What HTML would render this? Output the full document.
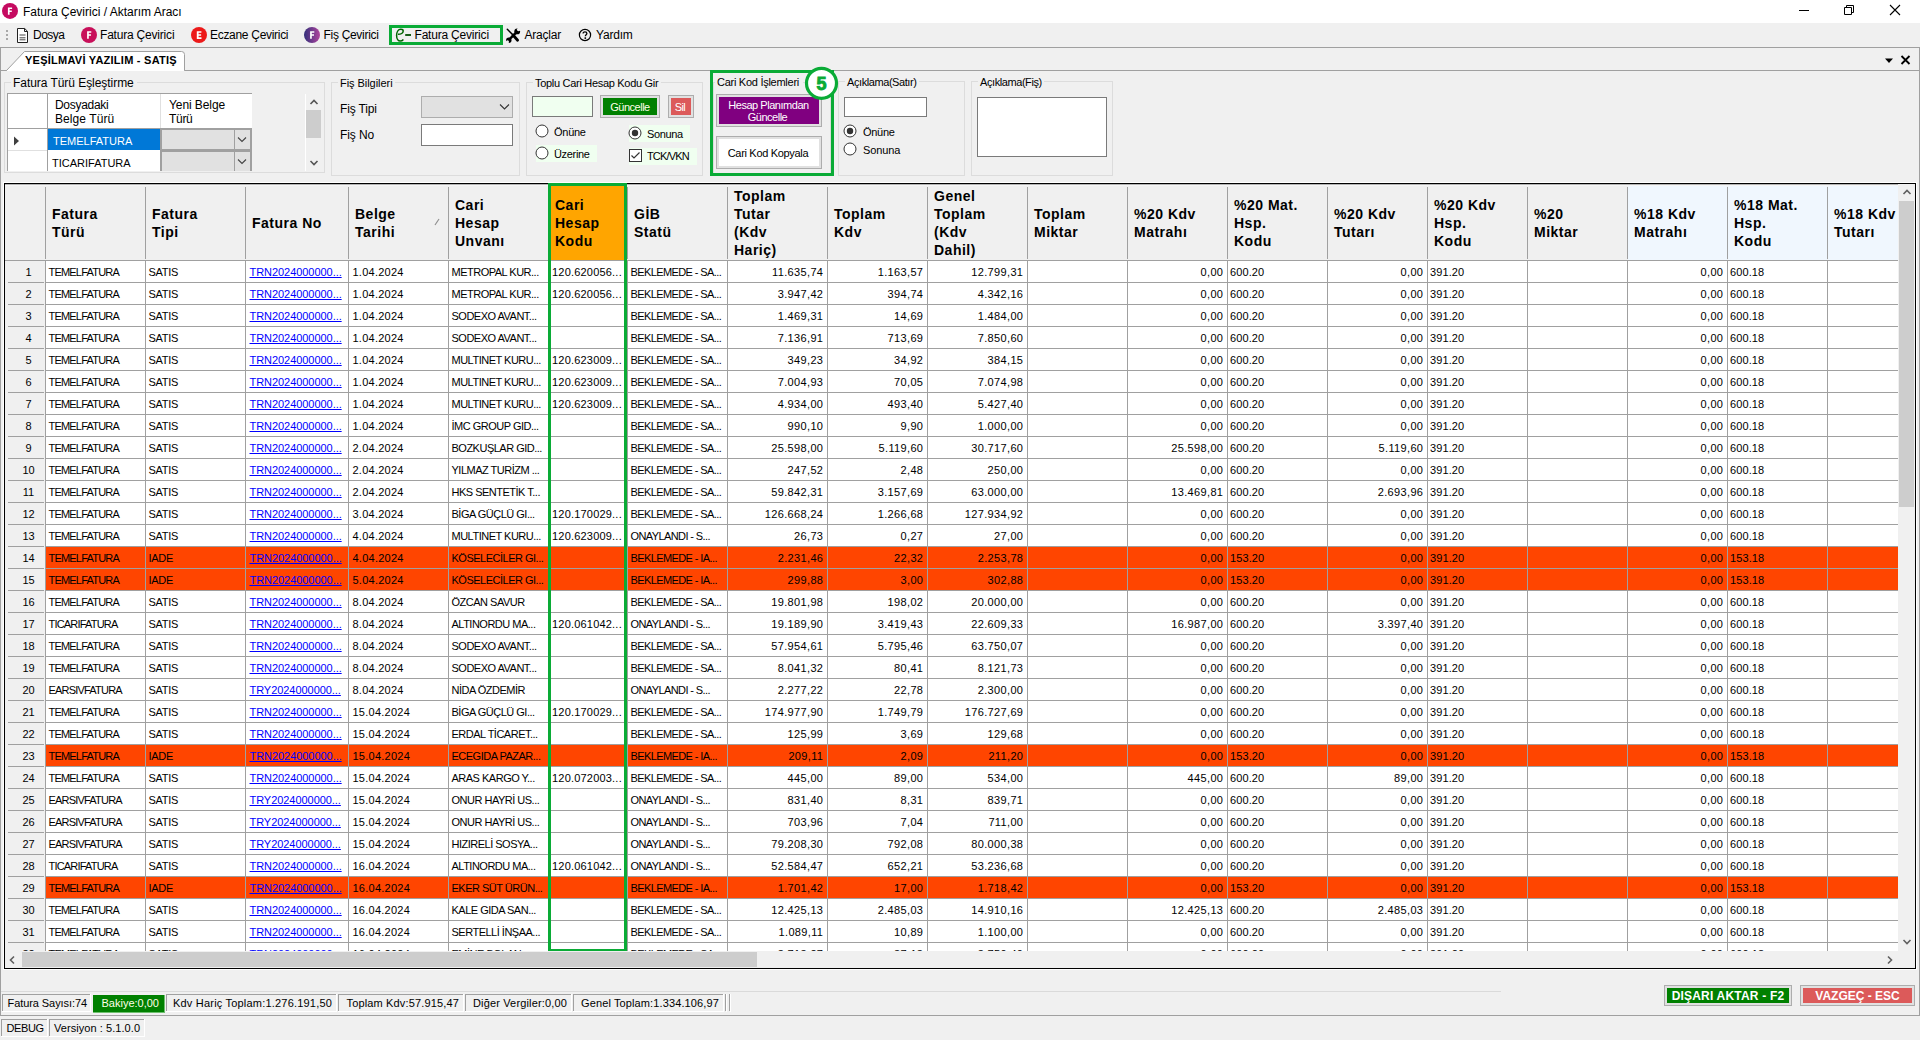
<!DOCTYPE html><html><head><meta charset="utf-8"><style>html,body{margin:0;padding:0;width:1920px;height:1040px;overflow:hidden;background:#f0f0f0;}.t,.r{position:absolute;} .t{font-family:"Liberation Sans", sans-serif;white-space:pre;}</style></head><body><div class="r" style="left:0px;top:0px;width:1920px;height:23px;background:#ffffff;"></div>
<svg class="r" style="left:0px;top:0px" width="22" height="22" viewBox="0 0 22 22"><circle cx="10" cy="10.9" r="8" fill="#c50a60"/><path d="M7.9 7.4h4.2v1.6H9.6v1.4h2.2v1.5H9.6v2.9H7.9z" fill="#fff"/></svg>
<div class="t" style="left:23px;top:5px;font-size:12px;line-height:14px;color:#000;">Fatura Çevirici / Aktarım Aracı</div>
<div class="r" style="left:1799px;top:10px;width:10px;height:1px;background:#000;"></div>
<svg class="r" style="left:1843px;top:3px" width="13" height="13" viewBox="0 0 13 13"><path d="M1.5 4.5h7v7h-7z M3.5 4.5v-2h7v7h-2" fill="none" stroke="#000" stroke-width="1"/></svg>
<svg class="r" style="left:1889px;top:4px" width="12" height="12" viewBox="0 0 12 12"><path d="M1 1L11 11M11 1L1 11" stroke="#000" stroke-width="1.1"/></svg>
<div class="r" style="left:0px;top:23px;width:1920px;height:24px;background:#f0f0f0;"></div>
<div class="r" style="left:6px;top:30px;width:2px;height:2px;background:#a8a8a8;"></div>
<div class="r" style="left:6px;top:34px;width:2px;height:2px;background:#a8a8a8;"></div>
<div class="r" style="left:6px;top:38px;width:2px;height:2px;background:#a8a8a8;"></div>
<svg class="r" style="left:16px;top:27px" width="13" height="17" viewBox="0 0 13 17"><path d="M1.5 1.5h7.2l2.8 2.8v11.2h-10z M8.5 1.5v3h3" fill="#fff" stroke="#222" stroke-width="1"/><path d="M3.5 8h6M3.5 10.8h6M3.5 12.8h6" stroke="#333" stroke-width="0.9"/></svg>
<div class="t" style="left:33px;top:28px;font-size:12px;line-height:14px;color:#000;letter-spacing:-0.5px;">Dosya</div>
<svg class="r" style="left:80px;top:26px" width="18" height="18" viewBox="0 0 18 18"><defs><linearGradient id="g89" x1="0" x2="1"><stop offset="0" stop-color="#33307a"/><stop offset="1" stop-color="#b0449e"/></linearGradient></defs><circle cx="9" cy="9" r="8" fill="#c8105a"/><path d="M7.1 5.2h4.2v1.6H8.8v1.5h2.2v1.5H8.8v3H7.1z" fill="#fff"/></svg>
<div class="t" style="left:100px;top:28px;font-size:12px;line-height:14px;color:#000;letter-spacing:-0.2px;">Fatura Çevirici</div>
<svg class="r" style="left:190px;top:26px" width="18" height="18" viewBox="0 0 18 18"><defs><linearGradient id="g199" x1="0" x2="1"><stop offset="0" stop-color="#33307a"/><stop offset="1" stop-color="#b0449e"/></linearGradient></defs><circle cx="9" cy="9" r="8" fill="#ec1a1a"/><path d="M6.8 5.2h4.6v1.6H8.6v1.5h2.5v1.5H8.6v1.5h2.9v1.6H6.8z" fill="#fff"/></svg>
<div class="t" style="left:210px;top:28px;font-size:12px;line-height:14px;color:#000;letter-spacing:-0.3px;">Eczane Çevirici</div>
<svg class="r" style="left:303px;top:26px" width="18" height="18" viewBox="0 0 18 18"><defs><linearGradient id="g312" x1="0" x2="1"><stop offset="0" stop-color="#33307a"/><stop offset="1" stop-color="#b0449e"/></linearGradient></defs><circle cx="9" cy="9" r="8" fill="url(#g312)"/><path d="M7.1 5.2h4.2v1.6H8.8v1.5h2.2v1.5H8.8v3H7.1z" fill="#fff"/></svg>
<div class="t" style="left:323.5px;top:28px;font-size:12px;line-height:14px;color:#000;letter-spacing:-0.3px;">Fiş Çevirici</div>
<div class="r" style="left:389px;top:25px;width:114px;height:20px;border:3px solid #0aab36;box-sizing:border-box;"></div>
<svg class="r" style="left:392px;top:26px" width="24" height="18" viewBox="0 0 24 18"><path d="M6 8.3C9 8.3 11.2 6.8 11.2 5 11.2 3.7 10.3 3.3 8.8 3.3 6.2 3.3 4.6 6.2 4.6 9.6 4.6 12.7 6.2 15.1 8.2 15.1 9.7 15.1 10.8 14.2 11.4 13.5" fill="none" stroke="#006400" stroke-width="1.5"/><path d="M13.2 9h5.8" stroke="#004d00" stroke-width="1.8"/></svg>
<div class="t" style="left:414.5px;top:28px;font-size:12px;line-height:14px;color:#000;letter-spacing:-0.2px;">Fatura Çevirici</div>
<svg class="r" style="left:502px;top:26px" width="22" height="18" viewBox="0 0 22 18"><path d="M5.3 3.3L11 9" stroke="#000" stroke-width="1.5" stroke-linecap="round"/><path d="M11 9L15.6 14.2" stroke="#000" stroke-width="2.8" stroke-linecap="round"/><path d="M14.2 6.6L7.6 13.2" stroke="#000" stroke-width="2.4"/><circle cx="15.2" cy="5.4" r="2.9" fill="#000"/><circle cx="16.6" cy="3.6" r="1.7" fill="#f0f0f0"/><path d="M16.6 3.6L19 1.2" stroke="#f0f0f0" stroke-width="2.6"/><circle cx="6.8" cy="14.2" r="2.7" fill="#000"/><circle cx="5.5" cy="15.8" r="1.5" fill="#f0f0f0"/><path d="M5.5 15.8L3 18.3" stroke="#f0f0f0" stroke-width="2.4"/></svg>
<div class="t" style="left:524.5px;top:28px;font-size:12px;line-height:14px;color:#000;letter-spacing:-0.2px;">Araçlar</div>
<svg class="r" style="left:578px;top:28px" width="14" height="14" viewBox="0 0 14 14"><circle cx="7" cy="7" r="5.6" fill="none" stroke="#000" stroke-width="1.2"/><path d="M5.1 5.6C5.1 4.4 5.9 3.8 7 3.8 8.1 3.8 8.9 4.5 8.9 5.4 8.9 6.5 7.4 6.9 7.3 8.2" fill="none" stroke="#000" stroke-width="1.3"/><path d="M6.5 9.3h1.6v1.6H6.5z" fill="#000"/></svg>
<div class="t" style="left:596px;top:28px;font-size:12px;line-height:14px;color:#000;letter-spacing:-0.2px;">Yardım</div>
<div class="r" style="left:0px;top:47px;width:1920px;height:1px;background:#a0a0a0;"></div>
<div class="r" style="left:0px;top:48px;width:1920px;height:22px;background:#f0f0f0;"></div>
<div class="r" style="left:0px;top:70px;width:1920px;height:1px;background:#a0a0a0;"></div>
<div class="r" style="left:0px;top:47px;width:1px;height:969px;background:#a0a0a0;"></div>
<div class="r" style="left:1919px;top:47px;width:1px;height:969px;background:#a0a0a0;"></div>
<svg class="r" style="left:0px;top:47px" width="200" height="25" viewBox="0 0 200 25"><path d="M6.5 23.5L24.5 4.5H181.5Q184.5 4.5 184.5 7.5V23.5" fill="#fff" stroke="#a0a0a0" stroke-width="1"/></svg>
<div class="r" style="left:7px;top:70px;width:177px;height:1px;background:#fff;"></div>
<div class="t" style="left:25px;top:54px;font-size:11px;line-height:12px;font-weight:700;color:#000;letter-spacing:0.25px;">YEŞİLMAVİ YAZILIM - SATIŞ</div>
<svg class="r" style="left:1884px;top:57px" width="10" height="8" viewBox="0 0 10 8"><path d="M1 1.5h8L5 6z" fill="#000"/></svg>
<svg class="r" style="left:1900px;top:55px" width="11" height="10" viewBox="0 0 11 10"><path d="M1.5 1L9.5 9M9.5 1L1.5 9" stroke="#000" stroke-width="1.8"/></svg>
<div class="r" style="left:4px;top:82px;width:321px;height:91px;border:1px solid #dcdcdc;box-sizing:border-box;"></div>
<div class="r" style="left:11px;top:79px;width:126px;height:7px;background:#f0f0f0;"></div>
<div class="t" style="left:13px;top:76px;font-size:12px;line-height:14px;color:#000;letter-spacing:-0.05px;">Fatura Türü Eşleştirme</div>
<div class="r" style="left:331px;top:82px;width:189px;height:94px;border:1px solid #dcdcdc;box-sizing:border-box;"></div>
<div class="r" style="left:338px;top:79px;width:57px;height:7px;background:#f0f0f0;"></div>
<div class="t" style="left:340px;top:77px;font-size:11px;line-height:12px;color:#000;letter-spacing:-0.05px;">Fiş Bilgileri</div>
<div class="r" style="left:526px;top:82px;width:177px;height:94px;border:1px solid #dcdcdc;box-sizing:border-box;"></div>
<div class="r" style="left:533px;top:79px;width:128px;height:7px;background:#f0f0f0;"></div>
<div class="t" style="left:535px;top:77px;font-size:11px;line-height:12px;color:#000;letter-spacing:-0.3px;">Toplu Cari Hesap Kodu Gir</div>
<div class="r" style="left:713px;top:82px;width:118px;height:94px;border:1px solid #dcdcdc;box-sizing:border-box;"></div>
<div class="r" style="left:715px;top:79px;width:88px;height:7px;background:#f0f0f0;"></div>
<div class="t" style="left:717px;top:76px;font-size:11px;line-height:12px;color:#000;letter-spacing:-0.27px;">Cari Kod İşlemleri</div>
<div class="r" style="left:838px;top:81px;width:127px;height:95px;border:1px solid #dcdcdc;box-sizing:border-box;"></div>
<div class="r" style="left:845px;top:78px;width:74px;height:7px;background:#f0f0f0;"></div>
<div class="t" style="left:847px;top:76px;font-size:11px;line-height:12px;color:#000;letter-spacing:-0.42px;">Açıklama(Satır)</div>
<div class="r" style="left:971px;top:81px;width:142px;height:95px;border:1px solid #dcdcdc;box-sizing:border-box;"></div>
<div class="r" style="left:978px;top:78px;width:66px;height:7px;background:#f0f0f0;"></div>
<div class="t" style="left:980px;top:76px;font-size:11px;line-height:12px;color:#000;letter-spacing:-0.42px;">Açıklama(Fiş)</div>
<div class="r" style="left:7px;top:93px;width:245px;height:78px;background:#ffffff;"></div>
<div class="r" style="left:7px;top:93px;width:245px;height:1px;background:#a0a0a0;"></div>
<div class="r" style="left:7px;top:93px;width:1px;height:78px;background:#a0a0a0;"></div>
<div class="r" style="left:47px;top:94px;width:1px;height:77px;background:#a0a0a0;"></div>
<div class="r" style="left:160px;top:94px;width:1px;height:35px;background:#e0e0e0;"></div>
<div class="r" style="left:8px;top:128px;width:244px;height:1px;background:#a0a0a0;"></div>
<div class="r" style="left:8px;top:150px;width:39px;height:1px;background:#e0e0e0;"></div>
<div class="t" style="left:55px;top:98px;font-size:12px;line-height:14px;color:#000;letter-spacing:-0.3px;">Dosyadaki</div>
<div class="t" style="left:55px;top:112px;font-size:12px;line-height:14px;color:#000;letter-spacing:0.08px;">Belge Türü</div>
<div class="t" style="left:169px;top:98px;font-size:12px;line-height:14px;color:#000;letter-spacing:-0.08px;">Yeni Belge</div>
<div class="t" style="left:169px;top:112px;font-size:12px;line-height:14px;color:#000;letter-spacing:-0.3px;">Türü</div>
<svg class="r" style="left:13px;top:136px" width="7" height="10" viewBox="0 0 7 10"><path d="M1 0.5L6 5L1 9.5z" fill="#404040"/></svg>
<div class="r" style="left:48px;top:129px;width:112px;height:21px;background:#0078d7;"></div>
<div class="t" style="left:53px;top:135px;font-size:11px;line-height:12px;color:#ffffff;">TEMELFATURA</div>
<div class="t" style="left:52px;top:157px;font-size:11px;line-height:12px;color:#000;">TICARIFATURA</div>
<div class="r" style="left:160px;top:128px;width:92px;height:23px;background:#e1e1e1;border:2px solid #a0a0a0;box-sizing:border-box;"></div>
<div class="r" style="left:234px;top:130px;width:1px;height:21px;background:#a0a0a0;"></div>
<svg class="r" style="left:237px;top:136px" width="10" height="7" viewBox="0 0 10 7"><path d="M1 1.5L5 5.5L9 1.5" fill="none" stroke="#444" stroke-width="1.1"/></svg>
<div class="r" style="left:160px;top:150px;width:92px;height:21px;background:#e1e1e1;border:2px solid #a0a0a0;box-sizing:border-box;border-bottom:none;"></div>
<div class="r" style="left:234px;top:152px;width:1px;height:19px;background:#a0a0a0;"></div>
<svg class="r" style="left:237px;top:158px" width="10" height="7" viewBox="0 0 10 7"><path d="M1 1.5L5 5.5L9 1.5" fill="none" stroke="#444" stroke-width="1.1"/></svg>
<div class="r" style="left:306px;top:94px;width:15px;height:77px;background:#f0f0f0;"></div>
<div class="r" style="left:305px;top:94px;width:1px;height:77px;background:#ffffff;"></div>
<div class="r" style="left:306px;top:110px;width:15px;height:28px;background:#cdcdcd;"></div>
<svg class="r" style="left:309px;top:98px" width="10" height="8" viewBox="0 0 10 8"><path d="M1.5 6L5 2.5L8.5 6" fill="none" stroke="#555" stroke-width="1.6"/></svg>
<svg class="r" style="left:309px;top:159px" width="10" height="8" viewBox="0 0 10 8"><path d="M1.5 2L5 5.5L8.5 2" fill="none" stroke="#555" stroke-width="1.6"/></svg>
<div class="t" style="left:340px;top:102px;font-size:12px;line-height:14px;color:#000;letter-spacing:-0.15px;">Fiş Tipi</div>
<div class="r" style="left:421px;top:96px;width:92px;height:22px;background:#e1e1e1;border:1px solid #adadad;box-sizing:border-box;"></div>
<svg class="r" style="left:499px;top:103px" width="11" height="8" viewBox="0 0 11 8"><path d="M1 1.5L5.5 6L10 1.5" fill="none" stroke="#333" stroke-width="1.1"/></svg>
<div class="t" style="left:340px;top:128px;font-size:12px;line-height:14px;color:#000;letter-spacing:-0.1px;">Fiş No</div>
<div class="r" style="left:421px;top:124px;width:92px;height:22px;background:#ffffff;border:1px solid #7a7a7a;box-sizing:border-box;"></div>
<div class="r" style="left:532px;top:96px;width:61px;height:21px;background:#f0fff0;border:1px solid #7a7a7a;box-sizing:border-box;"></div>
<div class="r" style="left:600px;top:95px;width:60px;height:23px;background:#e1e1e1;border:1px solid #adadad;box-sizing:border-box;"></div>
<div class="r" style="left:603px;top:98px;width:54px;height:17px;background:#008000;"></div>
<div class="t" style="left:600.0px;width:60px;text-align:center;top:101px;font-size:11px;line-height:12px;color:#ffffe8;letter-spacing:-0.5px;">Güncelle</div>
<div class="r" style="left:668px;top:95px;width:26px;height:23px;background:#e1e1e1;border:1px solid #adadad;box-sizing:border-box;"></div>
<div class="r" style="left:671px;top:98px;width:20px;height:17px;background:#d9534f;background:#dc5a5a;"></div>
<div class="t" style="left:665.0px;width:30px;text-align:center;top:101px;font-size:11px;line-height:12px;color:#ffffff;letter-spacing:-0.6px;">Sil</div>
<svg class="r" style="left:535px;top:124px" width="14" height="14" viewBox="0 0 14 14"><circle cx="7" cy="7" r="6" fill="#fff" stroke="#333" stroke-width="1"/></svg>
<div class="t" style="left:554px;top:126px;font-size:11px;line-height:12px;color:#000;letter-spacing:-0.26px;">Önüne</div>
<div class="r" style="left:536px;top:145px;width:61px;height:17px;background:#f0fff0;"></div>
<svg class="r" style="left:535px;top:146px" width="14" height="14" viewBox="0 0 14 14"><circle cx="7" cy="7" r="6" fill="#fff" stroke="#333" stroke-width="1"/></svg>
<div class="t" style="left:554px;top:148px;font-size:11px;line-height:12px;color:#000;letter-spacing:-0.33px;">Üzerine</div>
<div class="r" style="left:629px;top:125px;width:61px;height:17px;background:#f0fff0;"></div>
<svg class="r" style="left:628px;top:126px" width="14" height="14" viewBox="0 0 14 14"><circle cx="7" cy="7" r="6" fill="#fff" stroke="#333" stroke-width="1"/><circle cx="7" cy="7" r="3.2" fill="#333"/></svg>
<div class="t" style="left:647px;top:128px;font-size:11px;line-height:12px;color:#000;letter-spacing:-0.35px;">Sonuna</div>
<div class="r" style="left:629px;top:148px;width:68px;height:17px;background:#f0fff0;"></div>
<svg class="r" style="left:629px;top:149px" width="13" height="13" viewBox="0 0 13 13"><rect x="0.5" y="0.5" width="12" height="12" fill="#fff" stroke="#333"/><path d="M2.5 6.5L5 9L10.5 3.5" fill="none" stroke="#333" stroke-width="1.2"/></svg>
<div class="t" style="left:647px;top:150px;font-size:11px;line-height:12px;color:#000;letter-spacing:-0.85px;">TCK/VKN</div>
<div class="r" style="left:716px;top:94px;width:106px;height:33px;background:#e1e1e1;border:1px solid #adadad;box-sizing:border-box;"></div>
<div class="r" style="left:719px;top:97px;width:100px;height:27px;background:#800080;"></div>
<div class="t" style="left:713.5px;width:110px;text-align:center;top:99px;font-size:11px;line-height:12px;color:#ffffff;letter-spacing:-0.47px;">Hesap Planımdan</div>
<div class="t" style="left:712.5px;width:110px;text-align:center;top:111px;font-size:11px;line-height:12px;color:#ffffff;letter-spacing:-0.5px;">Güncelle</div>
<div class="r" style="left:716px;top:136px;width:106px;height:33px;background:#e1e1e1;border:1px solid #adadad;box-sizing:border-box;"></div>
<div class="r" style="left:719px;top:139px;width:100px;height:27px;background:#ffffff;"></div>
<div class="t" style="left:713.0px;width:110px;text-align:center;top:147px;font-size:11px;line-height:12px;color:#000;letter-spacing:-0.32px;">Cari Kod Kopyala</div>
<div class="r" style="left:710px;top:70px;width:124px;height:106px;border:3px solid #0aab36;box-sizing:border-box;"></div>
<svg class="r" style="left:804px;top:66px" width="35" height="35" viewBox="0 0 35 35"><circle cx="17.5" cy="17.3" r="15" fill="#fff" stroke="#0aab36" stroke-width="3.2"/><text x="17.5" y="23.8" text-anchor="middle" font-family="Liberation Sans" font-weight="bold" font-size="18" fill="#0aab36" stroke="#0aab36" stroke-width="0.9">5</text></svg>
<div class="r" style="left:844px;top:97px;width:83px;height:20px;background:#ffffff;border:1px solid #7a7a7a;box-sizing:border-box;"></div>
<svg class="r" style="left:843px;top:124px" width="14" height="14" viewBox="0 0 14 14"><circle cx="7" cy="7" r="6" fill="#fff" stroke="#333" stroke-width="1"/><circle cx="7" cy="7" r="3.2" fill="#333"/></svg>
<div class="t" style="left:863px;top:126px;font-size:11px;line-height:12px;color:#000;letter-spacing:-0.3px;">Önüne</div>
<svg class="r" style="left:843px;top:142px" width="14" height="14" viewBox="0 0 14 14"><circle cx="7" cy="7" r="6" fill="#fff" stroke="#333" stroke-width="1"/></svg>
<div class="t" style="left:863px;top:144px;font-size:11px;line-height:12px;color:#000;letter-spacing:-0.1px;">Sonuna</div>
<div class="r" style="left:977px;top:97px;width:130px;height:60px;background:#ffffff;border:1px solid #7a7a7a;box-sizing:border-box;"></div>
<div class="r" style="left:4px;top:183px;width:1912px;height:786px;background:#f0f0f0;border:1px solid #000;box-sizing:border-box;"></div>
<div class="r" style="left:3px;top:182px;width:1913px;height:1px;background:#ffffff;"></div>
<div class="r" style="left:3px;top:182px;width:1px;height:787px;background:#ffffff;"></div>
<div class="r" style="left:3px;top:969px;width:1914px;height:1px;background:#ffffff;"></div>
<div class="r" style="left:1916px;top:182px;width:1px;height:788px;background:#ffffff;"></div>
<div class="r" style="left:5px;top:184px;width:1893px;height:76px;background:#f0f0f0;"></div>
<div class="t" style="left:52px;top:206px;font-size:14px;line-height:16px;font-weight:700;color:#000;letter-spacing:0.5px;">Fatura</div>
<div class="t" style="left:52px;top:224px;font-size:14px;line-height:16px;font-weight:700;color:#000;letter-spacing:0.5px;">Türü</div>
<div class="t" style="left:152px;top:206px;font-size:14px;line-height:16px;font-weight:700;color:#000;letter-spacing:0.5px;">Fatura</div>
<div class="t" style="left:152px;top:224px;font-size:14px;line-height:16px;font-weight:700;color:#000;letter-spacing:0.5px;">Tipi</div>
<div class="t" style="left:252px;top:215px;font-size:14px;line-height:16px;font-weight:700;color:#000;letter-spacing:0.5px;">Fatura No</div>
<div class="t" style="left:355px;top:206px;font-size:14px;line-height:16px;font-weight:700;color:#000;letter-spacing:0.5px;">Belge</div>
<div class="t" style="left:355px;top:224px;font-size:14px;line-height:16px;font-weight:700;color:#000;letter-spacing:0.5px;">Tarihi</div>
<div class="t" style="left:455px;top:197px;font-size:14px;line-height:16px;font-weight:700;color:#000;letter-spacing:0.5px;">Cari</div>
<div class="t" style="left:455px;top:215px;font-size:14px;line-height:16px;font-weight:700;color:#000;letter-spacing:0.5px;">Hesap</div>
<div class="t" style="left:455px;top:233px;font-size:14px;line-height:16px;font-weight:700;color:#000;letter-spacing:0.5px;">Unvanı</div>
<div class="r" style="left:549px;top:184px;width:78px;height:76px;background:#ffa500;"></div>
<div class="t" style="left:555px;top:197px;font-size:14px;line-height:16px;font-weight:700;color:#000;letter-spacing:0.5px;">Cari</div>
<div class="t" style="left:555px;top:215px;font-size:14px;line-height:16px;font-weight:700;color:#000;letter-spacing:0.5px;">Hesap</div>
<div class="t" style="left:555px;top:233px;font-size:14px;line-height:16px;font-weight:700;color:#000;letter-spacing:0.5px;">Kodu</div>
<div class="t" style="left:634px;top:206px;font-size:14px;line-height:16px;font-weight:700;color:#000;letter-spacing:0.5px;">GİB</div>
<div class="t" style="left:634px;top:224px;font-size:14px;line-height:16px;font-weight:700;color:#000;letter-spacing:0.5px;">Statü</div>
<div class="t" style="left:734px;top:188px;font-size:14px;line-height:16px;font-weight:700;color:#000;letter-spacing:0.5px;">Toplam</div>
<div class="t" style="left:734px;top:206px;font-size:14px;line-height:16px;font-weight:700;color:#000;letter-spacing:0.5px;">Tutar</div>
<div class="t" style="left:734px;top:224px;font-size:14px;line-height:16px;font-weight:700;color:#000;letter-spacing:0.5px;">(Kdv</div>
<div class="t" style="left:734px;top:242px;font-size:14px;line-height:16px;font-weight:700;color:#000;letter-spacing:0.5px;">Hariç)</div>
<div class="t" style="left:834px;top:206px;font-size:14px;line-height:16px;font-weight:700;color:#000;letter-spacing:0.5px;">Toplam</div>
<div class="t" style="left:834px;top:224px;font-size:14px;line-height:16px;font-weight:700;color:#000;letter-spacing:0.5px;">Kdv</div>
<div class="t" style="left:934px;top:188px;font-size:14px;line-height:16px;font-weight:700;color:#000;letter-spacing:0.5px;">Genel</div>
<div class="t" style="left:934px;top:206px;font-size:14px;line-height:16px;font-weight:700;color:#000;letter-spacing:0.5px;">Toplam</div>
<div class="t" style="left:934px;top:224px;font-size:14px;line-height:16px;font-weight:700;color:#000;letter-spacing:0.5px;">(Kdv</div>
<div class="t" style="left:934px;top:242px;font-size:14px;line-height:16px;font-weight:700;color:#000;letter-spacing:0.5px;">Dahil)</div>
<div class="t" style="left:1034px;top:206px;font-size:14px;line-height:16px;font-weight:700;color:#000;letter-spacing:0.5px;">Toplam</div>
<div class="t" style="left:1034px;top:224px;font-size:14px;line-height:16px;font-weight:700;color:#000;letter-spacing:0.5px;">Miktar</div>
<div class="t" style="left:1134px;top:206px;font-size:14px;line-height:16px;font-weight:700;color:#000;letter-spacing:0.5px;">%20 Kdv</div>
<div class="t" style="left:1134px;top:224px;font-size:14px;line-height:16px;font-weight:700;color:#000;letter-spacing:0.5px;">Matrahı</div>
<div class="t" style="left:1234px;top:197px;font-size:14px;line-height:16px;font-weight:700;color:#000;letter-spacing:0.5px;">%20 Mat.</div>
<div class="t" style="left:1234px;top:215px;font-size:14px;line-height:16px;font-weight:700;color:#000;letter-spacing:0.5px;">Hsp.</div>
<div class="t" style="left:1234px;top:233px;font-size:14px;line-height:16px;font-weight:700;color:#000;letter-spacing:0.5px;">Kodu</div>
<div class="t" style="left:1334px;top:206px;font-size:14px;line-height:16px;font-weight:700;color:#000;letter-spacing:0.5px;">%20 Kdv</div>
<div class="t" style="left:1334px;top:224px;font-size:14px;line-height:16px;font-weight:700;color:#000;letter-spacing:0.5px;">Tutarı</div>
<div class="t" style="left:1434px;top:197px;font-size:14px;line-height:16px;font-weight:700;color:#000;letter-spacing:0.5px;">%20 Kdv</div>
<div class="t" style="left:1434px;top:215px;font-size:14px;line-height:16px;font-weight:700;color:#000;letter-spacing:0.5px;">Hsp.</div>
<div class="t" style="left:1434px;top:233px;font-size:14px;line-height:16px;font-weight:700;color:#000;letter-spacing:0.5px;">Kodu</div>
<div class="t" style="left:1534px;top:206px;font-size:14px;line-height:16px;font-weight:700;color:#000;letter-spacing:0.5px;">%20</div>
<div class="t" style="left:1534px;top:224px;font-size:14px;line-height:16px;font-weight:700;color:#000;letter-spacing:0.5px;">Miktar</div>
<div class="r" style="left:1628px;top:184px;width:99px;height:76px;background:#f0f7fe;"></div>
<div class="t" style="left:1634px;top:206px;font-size:14px;line-height:16px;font-weight:700;color:#000;letter-spacing:0.5px;">%18 Kdv</div>
<div class="t" style="left:1634px;top:224px;font-size:14px;line-height:16px;font-weight:700;color:#000;letter-spacing:0.5px;">Matrahı</div>
<div class="r" style="left:1728px;top:184px;width:99px;height:76px;background:#f0f7fe;"></div>
<div class="t" style="left:1734px;top:197px;font-size:14px;line-height:16px;font-weight:700;color:#000;letter-spacing:0.5px;">%18 Mat.</div>
<div class="t" style="left:1734px;top:215px;font-size:14px;line-height:16px;font-weight:700;color:#000;letter-spacing:0.5px;">Hsp.</div>
<div class="t" style="left:1734px;top:233px;font-size:14px;line-height:16px;font-weight:700;color:#000;letter-spacing:0.5px;">Kodu</div>
<div class="r" style="left:1828px;top:184px;width:70px;height:76px;background:#f0f7fe;"></div>
<div class="t" style="left:1834px;top:206px;font-size:14px;line-height:16px;font-weight:700;color:#000;letter-spacing:0.5px;">%18 Kdv</div>
<div class="t" style="left:1834px;top:224px;font-size:14px;line-height:16px;font-weight:700;color:#000;letter-spacing:0.5px;">Tutarı</div>
<div class="r" style="left:45px;top:187px;width:1px;height:72px;background:#a0a0a0;"></div>
<div class="r" style="left:145px;top:187px;width:1px;height:72px;background:#a0a0a0;"></div>
<div class="r" style="left:245px;top:187px;width:1px;height:72px;background:#a0a0a0;"></div>
<div class="r" style="left:348px;top:187px;width:1px;height:72px;background:#a0a0a0;"></div>
<div class="r" style="left:448px;top:187px;width:1px;height:72px;background:#a0a0a0;"></div>
<div class="r" style="left:548px;top:187px;width:1px;height:72px;background:#a0a0a0;"></div>
<div class="r" style="left:627px;top:187px;width:1px;height:72px;background:#a0a0a0;"></div>
<div class="r" style="left:727px;top:187px;width:1px;height:72px;background:#a0a0a0;"></div>
<div class="r" style="left:827px;top:187px;width:1px;height:72px;background:#a0a0a0;"></div>
<div class="r" style="left:927px;top:187px;width:1px;height:72px;background:#a0a0a0;"></div>
<div class="r" style="left:1027px;top:187px;width:1px;height:72px;background:#a0a0a0;"></div>
<div class="r" style="left:1127px;top:187px;width:1px;height:72px;background:#a0a0a0;"></div>
<div class="r" style="left:1227px;top:187px;width:1px;height:72px;background:#a0a0a0;"></div>
<div class="r" style="left:1327px;top:187px;width:1px;height:72px;background:#a0a0a0;"></div>
<div class="r" style="left:1427px;top:187px;width:1px;height:72px;background:#a0a0a0;"></div>
<div class="r" style="left:1527px;top:187px;width:1px;height:72px;background:#a0a0a0;"></div>
<div class="r" style="left:1627px;top:187px;width:1px;height:72px;background:#a0a0a0;"></div>
<div class="r" style="left:1727px;top:187px;width:1px;height:72px;background:#a0a0a0;"></div>
<div class="r" style="left:1827px;top:187px;width:1px;height:72px;background:#a0a0a0;"></div>
<svg class="r" style="left:434px;top:218px" width="6" height="8" viewBox="0 0 6 8"><path d="M1 7L5 1" stroke="#909090" stroke-width="1.2"/></svg>
<div class="r" style="left:5px;top:260px;width:1893px;height:1px;background:#a0a0a0;"></div>
<div class="r" style="left:5px;top:184px;width:1893px;height:1px;background:#b4b4b4;"></div>
<div class="r" style="left:5px;top:185px;width:1893px;height:1px;background:#f6f6f6;"></div>
<div class="r" style="left:5px;top:261px;width:1893px;height:690px;overflow:hidden;background:#fff">
<div class="r" style="left:0px;top:0px;width:40px;height:690px;background:#f0f0f0;"></div>
<div class="r" style="left:3px;top:21px;width:36px;height:1px;background:#a0a0a0;"></div>
<div class="r" style="left:41px;top:21px;width:1852px;height:1px;background:#a0a0a0;"></div>
<div class="t" style="left:8.5px;width:30px;text-align:center;top:5px;font-size:11px;line-height:12px;color:#000;">1</div>
<div class="t" style="left:43.5px;top:5px;font-size:11px;line-height:12px;color:#000;letter-spacing:-0.8px;">TEMELFATURA</div>
<div class="t" style="left:143.5px;top:5px;font-size:11px;line-height:12px;color:#000;letter-spacing:-0.3px;">SATIS</div>
<div class="t" style="left:244.5px;top:5px;font-size:11px;line-height:12px;color:#0000ff;letter-spacing:-0.05px;text-decoration:underline;">TRN2024000000...</div>
<div class="t" style="left:347.5px;top:5px;font-size:11px;line-height:12px;color:#000;letter-spacing:0.25px;">1.04.2024</div>
<div class="t" style="left:446.5px;top:5px;font-size:11px;line-height:12px;color:#000;letter-spacing:-0.5px;">METROPAL KUR...</div>
<div class="t" style="left:547px;top:5px;font-size:11px;line-height:12px;color:#000;letter-spacing:0.2px;">120.620056...</div>
<div class="t" style="left:625.5px;top:5px;font-size:11px;line-height:12px;color:#000;letter-spacing:-0.6px;">BEKLEMEDE - SA...</div>
<div class="t" style="left:723.35px;width:95px;text-align:right;top:5px;font-size:11px;line-height:12px;color:#000;letter-spacing:0.35px;">11.635,74</div>
<div class="t" style="left:823.35px;width:95px;text-align:right;top:5px;font-size:11px;line-height:12px;color:#000;letter-spacing:0.35px;">1.163,57</div>
<div class="t" style="left:923.35px;width:95px;text-align:right;top:5px;font-size:11px;line-height:12px;color:#000;letter-spacing:0.35px;">12.799,31</div>
<div class="t" style="left:1123.35px;width:95px;text-align:right;top:5px;font-size:11px;line-height:12px;color:#000;letter-spacing:0.35px;">0,00</div>
<div class="t" style="left:1323.35px;width:95px;text-align:right;top:5px;font-size:11px;line-height:12px;color:#000;letter-spacing:0.35px;">0,00</div>
<div class="t" style="left:1623.35px;width:95px;text-align:right;top:5px;font-size:11px;line-height:12px;color:#000;letter-spacing:0.35px;">0,00</div>
<div class="t" style="left:1225px;top:5px;font-size:11px;line-height:12px;color:#000;letter-spacing:0.1px;">600.20</div>
<div class="t" style="left:1425px;top:5px;font-size:11px;line-height:12px;color:#000;letter-spacing:0.1px;">391.20</div>
<div class="t" style="left:1725px;top:5px;font-size:11px;line-height:12px;color:#000;letter-spacing:0.1px;">600.18</div>
<div class="r" style="left:3px;top:43px;width:36px;height:1px;background:#a0a0a0;"></div>
<div class="r" style="left:41px;top:43px;width:1852px;height:1px;background:#a0a0a0;"></div>
<div class="t" style="left:8.5px;width:30px;text-align:center;top:27px;font-size:11px;line-height:12px;color:#000;">2</div>
<div class="t" style="left:43.5px;top:27px;font-size:11px;line-height:12px;color:#000;letter-spacing:-0.8px;">TEMELFATURA</div>
<div class="t" style="left:143.5px;top:27px;font-size:11px;line-height:12px;color:#000;letter-spacing:-0.3px;">SATIS</div>
<div class="t" style="left:244.5px;top:27px;font-size:11px;line-height:12px;color:#0000ff;letter-spacing:-0.05px;text-decoration:underline;">TRN2024000000...</div>
<div class="t" style="left:347.5px;top:27px;font-size:11px;line-height:12px;color:#000;letter-spacing:0.25px;">1.04.2024</div>
<div class="t" style="left:446.5px;top:27px;font-size:11px;line-height:12px;color:#000;letter-spacing:-0.5px;">METROPAL KUR...</div>
<div class="t" style="left:547px;top:27px;font-size:11px;line-height:12px;color:#000;letter-spacing:0.2px;">120.620056...</div>
<div class="t" style="left:625.5px;top:27px;font-size:11px;line-height:12px;color:#000;letter-spacing:-0.6px;">BEKLEMEDE - SA...</div>
<div class="t" style="left:723.35px;width:95px;text-align:right;top:27px;font-size:11px;line-height:12px;color:#000;letter-spacing:0.35px;">3.947,42</div>
<div class="t" style="left:823.35px;width:95px;text-align:right;top:27px;font-size:11px;line-height:12px;color:#000;letter-spacing:0.35px;">394,74</div>
<div class="t" style="left:923.35px;width:95px;text-align:right;top:27px;font-size:11px;line-height:12px;color:#000;letter-spacing:0.35px;">4.342,16</div>
<div class="t" style="left:1123.35px;width:95px;text-align:right;top:27px;font-size:11px;line-height:12px;color:#000;letter-spacing:0.35px;">0,00</div>
<div class="t" style="left:1323.35px;width:95px;text-align:right;top:27px;font-size:11px;line-height:12px;color:#000;letter-spacing:0.35px;">0,00</div>
<div class="t" style="left:1623.35px;width:95px;text-align:right;top:27px;font-size:11px;line-height:12px;color:#000;letter-spacing:0.35px;">0,00</div>
<div class="t" style="left:1225px;top:27px;font-size:11px;line-height:12px;color:#000;letter-spacing:0.1px;">600.20</div>
<div class="t" style="left:1425px;top:27px;font-size:11px;line-height:12px;color:#000;letter-spacing:0.1px;">391.20</div>
<div class="t" style="left:1725px;top:27px;font-size:11px;line-height:12px;color:#000;letter-spacing:0.1px;">600.18</div>
<div class="r" style="left:3px;top:65px;width:36px;height:1px;background:#a0a0a0;"></div>
<div class="r" style="left:41px;top:65px;width:1852px;height:1px;background:#a0a0a0;"></div>
<div class="t" style="left:8.5px;width:30px;text-align:center;top:49px;font-size:11px;line-height:12px;color:#000;">3</div>
<div class="t" style="left:43.5px;top:49px;font-size:11px;line-height:12px;color:#000;letter-spacing:-0.8px;">TEMELFATURA</div>
<div class="t" style="left:143.5px;top:49px;font-size:11px;line-height:12px;color:#000;letter-spacing:-0.3px;">SATIS</div>
<div class="t" style="left:244.5px;top:49px;font-size:11px;line-height:12px;color:#0000ff;letter-spacing:-0.05px;text-decoration:underline;">TRN2024000000...</div>
<div class="t" style="left:347.5px;top:49px;font-size:11px;line-height:12px;color:#000;letter-spacing:0.25px;">1.04.2024</div>
<div class="t" style="left:446.5px;top:49px;font-size:11px;line-height:12px;color:#000;letter-spacing:-0.5px;">SODEXO AVANT...</div>
<div class="t" style="left:625.5px;top:49px;font-size:11px;line-height:12px;color:#000;letter-spacing:-0.6px;">BEKLEMEDE - SA...</div>
<div class="t" style="left:723.35px;width:95px;text-align:right;top:49px;font-size:11px;line-height:12px;color:#000;letter-spacing:0.35px;">1.469,31</div>
<div class="t" style="left:823.35px;width:95px;text-align:right;top:49px;font-size:11px;line-height:12px;color:#000;letter-spacing:0.35px;">14,69</div>
<div class="t" style="left:923.35px;width:95px;text-align:right;top:49px;font-size:11px;line-height:12px;color:#000;letter-spacing:0.35px;">1.484,00</div>
<div class="t" style="left:1123.35px;width:95px;text-align:right;top:49px;font-size:11px;line-height:12px;color:#000;letter-spacing:0.35px;">0,00</div>
<div class="t" style="left:1323.35px;width:95px;text-align:right;top:49px;font-size:11px;line-height:12px;color:#000;letter-spacing:0.35px;">0,00</div>
<div class="t" style="left:1623.35px;width:95px;text-align:right;top:49px;font-size:11px;line-height:12px;color:#000;letter-spacing:0.35px;">0,00</div>
<div class="t" style="left:1225px;top:49px;font-size:11px;line-height:12px;color:#000;letter-spacing:0.1px;">600.20</div>
<div class="t" style="left:1425px;top:49px;font-size:11px;line-height:12px;color:#000;letter-spacing:0.1px;">391.20</div>
<div class="t" style="left:1725px;top:49px;font-size:11px;line-height:12px;color:#000;letter-spacing:0.1px;">600.18</div>
<div class="r" style="left:3px;top:87px;width:36px;height:1px;background:#a0a0a0;"></div>
<div class="r" style="left:41px;top:87px;width:1852px;height:1px;background:#a0a0a0;"></div>
<div class="t" style="left:8.5px;width:30px;text-align:center;top:71px;font-size:11px;line-height:12px;color:#000;">4</div>
<div class="t" style="left:43.5px;top:71px;font-size:11px;line-height:12px;color:#000;letter-spacing:-0.8px;">TEMELFATURA</div>
<div class="t" style="left:143.5px;top:71px;font-size:11px;line-height:12px;color:#000;letter-spacing:-0.3px;">SATIS</div>
<div class="t" style="left:244.5px;top:71px;font-size:11px;line-height:12px;color:#0000ff;letter-spacing:-0.05px;text-decoration:underline;">TRN2024000000...</div>
<div class="t" style="left:347.5px;top:71px;font-size:11px;line-height:12px;color:#000;letter-spacing:0.25px;">1.04.2024</div>
<div class="t" style="left:446.5px;top:71px;font-size:11px;line-height:12px;color:#000;letter-spacing:-0.5px;">SODEXO AVANT...</div>
<div class="t" style="left:625.5px;top:71px;font-size:11px;line-height:12px;color:#000;letter-spacing:-0.6px;">BEKLEMEDE - SA...</div>
<div class="t" style="left:723.35px;width:95px;text-align:right;top:71px;font-size:11px;line-height:12px;color:#000;letter-spacing:0.35px;">7.136,91</div>
<div class="t" style="left:823.35px;width:95px;text-align:right;top:71px;font-size:11px;line-height:12px;color:#000;letter-spacing:0.35px;">713,69</div>
<div class="t" style="left:923.35px;width:95px;text-align:right;top:71px;font-size:11px;line-height:12px;color:#000;letter-spacing:0.35px;">7.850,60</div>
<div class="t" style="left:1123.35px;width:95px;text-align:right;top:71px;font-size:11px;line-height:12px;color:#000;letter-spacing:0.35px;">0,00</div>
<div class="t" style="left:1323.35px;width:95px;text-align:right;top:71px;font-size:11px;line-height:12px;color:#000;letter-spacing:0.35px;">0,00</div>
<div class="t" style="left:1623.35px;width:95px;text-align:right;top:71px;font-size:11px;line-height:12px;color:#000;letter-spacing:0.35px;">0,00</div>
<div class="t" style="left:1225px;top:71px;font-size:11px;line-height:12px;color:#000;letter-spacing:0.1px;">600.20</div>
<div class="t" style="left:1425px;top:71px;font-size:11px;line-height:12px;color:#000;letter-spacing:0.1px;">391.20</div>
<div class="t" style="left:1725px;top:71px;font-size:11px;line-height:12px;color:#000;letter-spacing:0.1px;">600.18</div>
<div class="r" style="left:3px;top:109px;width:36px;height:1px;background:#a0a0a0;"></div>
<div class="r" style="left:41px;top:109px;width:1852px;height:1px;background:#a0a0a0;"></div>
<div class="t" style="left:8.5px;width:30px;text-align:center;top:93px;font-size:11px;line-height:12px;color:#000;">5</div>
<div class="t" style="left:43.5px;top:93px;font-size:11px;line-height:12px;color:#000;letter-spacing:-0.8px;">TEMELFATURA</div>
<div class="t" style="left:143.5px;top:93px;font-size:11px;line-height:12px;color:#000;letter-spacing:-0.3px;">SATIS</div>
<div class="t" style="left:244.5px;top:93px;font-size:11px;line-height:12px;color:#0000ff;letter-spacing:-0.05px;text-decoration:underline;">TRN2024000000...</div>
<div class="t" style="left:347.5px;top:93px;font-size:11px;line-height:12px;color:#000;letter-spacing:0.25px;">1.04.2024</div>
<div class="t" style="left:446.5px;top:93px;font-size:11px;line-height:12px;color:#000;letter-spacing:-0.5px;">MULTINET KURU...</div>
<div class="t" style="left:547px;top:93px;font-size:11px;line-height:12px;color:#000;letter-spacing:0.2px;">120.623009...</div>
<div class="t" style="left:625.5px;top:93px;font-size:11px;line-height:12px;color:#000;letter-spacing:-0.6px;">BEKLEMEDE - SA...</div>
<div class="t" style="left:723.35px;width:95px;text-align:right;top:93px;font-size:11px;line-height:12px;color:#000;letter-spacing:0.35px;">349,23</div>
<div class="t" style="left:823.35px;width:95px;text-align:right;top:93px;font-size:11px;line-height:12px;color:#000;letter-spacing:0.35px;">34,92</div>
<div class="t" style="left:923.35px;width:95px;text-align:right;top:93px;font-size:11px;line-height:12px;color:#000;letter-spacing:0.35px;">384,15</div>
<div class="t" style="left:1123.35px;width:95px;text-align:right;top:93px;font-size:11px;line-height:12px;color:#000;letter-spacing:0.35px;">0,00</div>
<div class="t" style="left:1323.35px;width:95px;text-align:right;top:93px;font-size:11px;line-height:12px;color:#000;letter-spacing:0.35px;">0,00</div>
<div class="t" style="left:1623.35px;width:95px;text-align:right;top:93px;font-size:11px;line-height:12px;color:#000;letter-spacing:0.35px;">0,00</div>
<div class="t" style="left:1225px;top:93px;font-size:11px;line-height:12px;color:#000;letter-spacing:0.1px;">600.20</div>
<div class="t" style="left:1425px;top:93px;font-size:11px;line-height:12px;color:#000;letter-spacing:0.1px;">391.20</div>
<div class="t" style="left:1725px;top:93px;font-size:11px;line-height:12px;color:#000;letter-spacing:0.1px;">600.18</div>
<div class="r" style="left:3px;top:131px;width:36px;height:1px;background:#a0a0a0;"></div>
<div class="r" style="left:41px;top:131px;width:1852px;height:1px;background:#a0a0a0;"></div>
<div class="t" style="left:8.5px;width:30px;text-align:center;top:115px;font-size:11px;line-height:12px;color:#000;">6</div>
<div class="t" style="left:43.5px;top:115px;font-size:11px;line-height:12px;color:#000;letter-spacing:-0.8px;">TEMELFATURA</div>
<div class="t" style="left:143.5px;top:115px;font-size:11px;line-height:12px;color:#000;letter-spacing:-0.3px;">SATIS</div>
<div class="t" style="left:244.5px;top:115px;font-size:11px;line-height:12px;color:#0000ff;letter-spacing:-0.05px;text-decoration:underline;">TRN2024000000...</div>
<div class="t" style="left:347.5px;top:115px;font-size:11px;line-height:12px;color:#000;letter-spacing:0.25px;">1.04.2024</div>
<div class="t" style="left:446.5px;top:115px;font-size:11px;line-height:12px;color:#000;letter-spacing:-0.5px;">MULTINET KURU...</div>
<div class="t" style="left:547px;top:115px;font-size:11px;line-height:12px;color:#000;letter-spacing:0.2px;">120.623009...</div>
<div class="t" style="left:625.5px;top:115px;font-size:11px;line-height:12px;color:#000;letter-spacing:-0.6px;">BEKLEMEDE - SA...</div>
<div class="t" style="left:723.35px;width:95px;text-align:right;top:115px;font-size:11px;line-height:12px;color:#000;letter-spacing:0.35px;">7.004,93</div>
<div class="t" style="left:823.35px;width:95px;text-align:right;top:115px;font-size:11px;line-height:12px;color:#000;letter-spacing:0.35px;">70,05</div>
<div class="t" style="left:923.35px;width:95px;text-align:right;top:115px;font-size:11px;line-height:12px;color:#000;letter-spacing:0.35px;">7.074,98</div>
<div class="t" style="left:1123.35px;width:95px;text-align:right;top:115px;font-size:11px;line-height:12px;color:#000;letter-spacing:0.35px;">0,00</div>
<div class="t" style="left:1323.35px;width:95px;text-align:right;top:115px;font-size:11px;line-height:12px;color:#000;letter-spacing:0.35px;">0,00</div>
<div class="t" style="left:1623.35px;width:95px;text-align:right;top:115px;font-size:11px;line-height:12px;color:#000;letter-spacing:0.35px;">0,00</div>
<div class="t" style="left:1225px;top:115px;font-size:11px;line-height:12px;color:#000;letter-spacing:0.1px;">600.20</div>
<div class="t" style="left:1425px;top:115px;font-size:11px;line-height:12px;color:#000;letter-spacing:0.1px;">391.20</div>
<div class="t" style="left:1725px;top:115px;font-size:11px;line-height:12px;color:#000;letter-spacing:0.1px;">600.18</div>
<div class="r" style="left:3px;top:153px;width:36px;height:1px;background:#a0a0a0;"></div>
<div class="r" style="left:41px;top:153px;width:1852px;height:1px;background:#a0a0a0;"></div>
<div class="t" style="left:8.5px;width:30px;text-align:center;top:137px;font-size:11px;line-height:12px;color:#000;">7</div>
<div class="t" style="left:43.5px;top:137px;font-size:11px;line-height:12px;color:#000;letter-spacing:-0.8px;">TEMELFATURA</div>
<div class="t" style="left:143.5px;top:137px;font-size:11px;line-height:12px;color:#000;letter-spacing:-0.3px;">SATIS</div>
<div class="t" style="left:244.5px;top:137px;font-size:11px;line-height:12px;color:#0000ff;letter-spacing:-0.05px;text-decoration:underline;">TRN2024000000...</div>
<div class="t" style="left:347.5px;top:137px;font-size:11px;line-height:12px;color:#000;letter-spacing:0.25px;">1.04.2024</div>
<div class="t" style="left:446.5px;top:137px;font-size:11px;line-height:12px;color:#000;letter-spacing:-0.5px;">MULTINET KURU...</div>
<div class="t" style="left:547px;top:137px;font-size:11px;line-height:12px;color:#000;letter-spacing:0.2px;">120.623009...</div>
<div class="t" style="left:625.5px;top:137px;font-size:11px;line-height:12px;color:#000;letter-spacing:-0.6px;">BEKLEMEDE - SA...</div>
<div class="t" style="left:723.35px;width:95px;text-align:right;top:137px;font-size:11px;line-height:12px;color:#000;letter-spacing:0.35px;">4.934,00</div>
<div class="t" style="left:823.35px;width:95px;text-align:right;top:137px;font-size:11px;line-height:12px;color:#000;letter-spacing:0.35px;">493,40</div>
<div class="t" style="left:923.35px;width:95px;text-align:right;top:137px;font-size:11px;line-height:12px;color:#000;letter-spacing:0.35px;">5.427,40</div>
<div class="t" style="left:1123.35px;width:95px;text-align:right;top:137px;font-size:11px;line-height:12px;color:#000;letter-spacing:0.35px;">0,00</div>
<div class="t" style="left:1323.35px;width:95px;text-align:right;top:137px;font-size:11px;line-height:12px;color:#000;letter-spacing:0.35px;">0,00</div>
<div class="t" style="left:1623.35px;width:95px;text-align:right;top:137px;font-size:11px;line-height:12px;color:#000;letter-spacing:0.35px;">0,00</div>
<div class="t" style="left:1225px;top:137px;font-size:11px;line-height:12px;color:#000;letter-spacing:0.1px;">600.20</div>
<div class="t" style="left:1425px;top:137px;font-size:11px;line-height:12px;color:#000;letter-spacing:0.1px;">391.20</div>
<div class="t" style="left:1725px;top:137px;font-size:11px;line-height:12px;color:#000;letter-spacing:0.1px;">600.18</div>
<div class="r" style="left:3px;top:175px;width:36px;height:1px;background:#a0a0a0;"></div>
<div class="r" style="left:41px;top:175px;width:1852px;height:1px;background:#a0a0a0;"></div>
<div class="t" style="left:8.5px;width:30px;text-align:center;top:159px;font-size:11px;line-height:12px;color:#000;">8</div>
<div class="t" style="left:43.5px;top:159px;font-size:11px;line-height:12px;color:#000;letter-spacing:-0.8px;">TEMELFATURA</div>
<div class="t" style="left:143.5px;top:159px;font-size:11px;line-height:12px;color:#000;letter-spacing:-0.3px;">SATIS</div>
<div class="t" style="left:244.5px;top:159px;font-size:11px;line-height:12px;color:#0000ff;letter-spacing:-0.05px;text-decoration:underline;">TRN2024000000...</div>
<div class="t" style="left:347.5px;top:159px;font-size:11px;line-height:12px;color:#000;letter-spacing:0.25px;">1.04.2024</div>
<div class="t" style="left:446.5px;top:159px;font-size:11px;line-height:12px;color:#000;letter-spacing:-0.5px;">İMC GROUP GID...</div>
<div class="t" style="left:625.5px;top:159px;font-size:11px;line-height:12px;color:#000;letter-spacing:-0.6px;">BEKLEMEDE - SA...</div>
<div class="t" style="left:723.35px;width:95px;text-align:right;top:159px;font-size:11px;line-height:12px;color:#000;letter-spacing:0.35px;">990,10</div>
<div class="t" style="left:823.35px;width:95px;text-align:right;top:159px;font-size:11px;line-height:12px;color:#000;letter-spacing:0.35px;">9,90</div>
<div class="t" style="left:923.35px;width:95px;text-align:right;top:159px;font-size:11px;line-height:12px;color:#000;letter-spacing:0.35px;">1.000,00</div>
<div class="t" style="left:1123.35px;width:95px;text-align:right;top:159px;font-size:11px;line-height:12px;color:#000;letter-spacing:0.35px;">0,00</div>
<div class="t" style="left:1323.35px;width:95px;text-align:right;top:159px;font-size:11px;line-height:12px;color:#000;letter-spacing:0.35px;">0,00</div>
<div class="t" style="left:1623.35px;width:95px;text-align:right;top:159px;font-size:11px;line-height:12px;color:#000;letter-spacing:0.35px;">0,00</div>
<div class="t" style="left:1225px;top:159px;font-size:11px;line-height:12px;color:#000;letter-spacing:0.1px;">600.20</div>
<div class="t" style="left:1425px;top:159px;font-size:11px;line-height:12px;color:#000;letter-spacing:0.1px;">391.20</div>
<div class="t" style="left:1725px;top:159px;font-size:11px;line-height:12px;color:#000;letter-spacing:0.1px;">600.18</div>
<div class="r" style="left:3px;top:197px;width:36px;height:1px;background:#a0a0a0;"></div>
<div class="r" style="left:41px;top:197px;width:1852px;height:1px;background:#a0a0a0;"></div>
<div class="t" style="left:8.5px;width:30px;text-align:center;top:181px;font-size:11px;line-height:12px;color:#000;">9</div>
<div class="t" style="left:43.5px;top:181px;font-size:11px;line-height:12px;color:#000;letter-spacing:-0.8px;">TEMELFATURA</div>
<div class="t" style="left:143.5px;top:181px;font-size:11px;line-height:12px;color:#000;letter-spacing:-0.3px;">SATIS</div>
<div class="t" style="left:244.5px;top:181px;font-size:11px;line-height:12px;color:#0000ff;letter-spacing:-0.05px;text-decoration:underline;">TRN2024000000...</div>
<div class="t" style="left:347.5px;top:181px;font-size:11px;line-height:12px;color:#000;letter-spacing:0.25px;">2.04.2024</div>
<div class="t" style="left:446.5px;top:181px;font-size:11px;line-height:12px;color:#000;letter-spacing:-0.5px;">BOZKUŞLAR GID...</div>
<div class="t" style="left:625.5px;top:181px;font-size:11px;line-height:12px;color:#000;letter-spacing:-0.6px;">BEKLEMEDE - SA...</div>
<div class="t" style="left:723.35px;width:95px;text-align:right;top:181px;font-size:11px;line-height:12px;color:#000;letter-spacing:0.35px;">25.598,00</div>
<div class="t" style="left:823.35px;width:95px;text-align:right;top:181px;font-size:11px;line-height:12px;color:#000;letter-spacing:0.35px;">5.119,60</div>
<div class="t" style="left:923.35px;width:95px;text-align:right;top:181px;font-size:11px;line-height:12px;color:#000;letter-spacing:0.35px;">30.717,60</div>
<div class="t" style="left:1123.35px;width:95px;text-align:right;top:181px;font-size:11px;line-height:12px;color:#000;letter-spacing:0.35px;">25.598,00</div>
<div class="t" style="left:1323.35px;width:95px;text-align:right;top:181px;font-size:11px;line-height:12px;color:#000;letter-spacing:0.35px;">5.119,60</div>
<div class="t" style="left:1623.35px;width:95px;text-align:right;top:181px;font-size:11px;line-height:12px;color:#000;letter-spacing:0.35px;">0,00</div>
<div class="t" style="left:1225px;top:181px;font-size:11px;line-height:12px;color:#000;letter-spacing:0.1px;">600.20</div>
<div class="t" style="left:1425px;top:181px;font-size:11px;line-height:12px;color:#000;letter-spacing:0.1px;">391.20</div>
<div class="t" style="left:1725px;top:181px;font-size:11px;line-height:12px;color:#000;letter-spacing:0.1px;">600.18</div>
<div class="r" style="left:3px;top:219px;width:36px;height:1px;background:#a0a0a0;"></div>
<div class="r" style="left:41px;top:219px;width:1852px;height:1px;background:#a0a0a0;"></div>
<div class="t" style="left:8.5px;width:30px;text-align:center;top:203px;font-size:11px;line-height:12px;color:#000;">10</div>
<div class="t" style="left:43.5px;top:203px;font-size:11px;line-height:12px;color:#000;letter-spacing:-0.8px;">TEMELFATURA</div>
<div class="t" style="left:143.5px;top:203px;font-size:11px;line-height:12px;color:#000;letter-spacing:-0.3px;">SATIS</div>
<div class="t" style="left:244.5px;top:203px;font-size:11px;line-height:12px;color:#0000ff;letter-spacing:-0.05px;text-decoration:underline;">TRN2024000000...</div>
<div class="t" style="left:347.5px;top:203px;font-size:11px;line-height:12px;color:#000;letter-spacing:0.25px;">2.04.2024</div>
<div class="t" style="left:446.5px;top:203px;font-size:11px;line-height:12px;color:#000;letter-spacing:-0.5px;">YILMAZ TURİZM ...</div>
<div class="t" style="left:625.5px;top:203px;font-size:11px;line-height:12px;color:#000;letter-spacing:-0.6px;">BEKLEMEDE - SA...</div>
<div class="t" style="left:723.35px;width:95px;text-align:right;top:203px;font-size:11px;line-height:12px;color:#000;letter-spacing:0.35px;">247,52</div>
<div class="t" style="left:823.35px;width:95px;text-align:right;top:203px;font-size:11px;line-height:12px;color:#000;letter-spacing:0.35px;">2,48</div>
<div class="t" style="left:923.35px;width:95px;text-align:right;top:203px;font-size:11px;line-height:12px;color:#000;letter-spacing:0.35px;">250,00</div>
<div class="t" style="left:1123.35px;width:95px;text-align:right;top:203px;font-size:11px;line-height:12px;color:#000;letter-spacing:0.35px;">0,00</div>
<div class="t" style="left:1323.35px;width:95px;text-align:right;top:203px;font-size:11px;line-height:12px;color:#000;letter-spacing:0.35px;">0,00</div>
<div class="t" style="left:1623.35px;width:95px;text-align:right;top:203px;font-size:11px;line-height:12px;color:#000;letter-spacing:0.35px;">0,00</div>
<div class="t" style="left:1225px;top:203px;font-size:11px;line-height:12px;color:#000;letter-spacing:0.1px;">600.20</div>
<div class="t" style="left:1425px;top:203px;font-size:11px;line-height:12px;color:#000;letter-spacing:0.1px;">391.20</div>
<div class="t" style="left:1725px;top:203px;font-size:11px;line-height:12px;color:#000;letter-spacing:0.1px;">600.18</div>
<div class="r" style="left:3px;top:241px;width:36px;height:1px;background:#a0a0a0;"></div>
<div class="r" style="left:41px;top:241px;width:1852px;height:1px;background:#a0a0a0;"></div>
<div class="t" style="left:8.5px;width:30px;text-align:center;top:225px;font-size:11px;line-height:12px;color:#000;">11</div>
<div class="t" style="left:43.5px;top:225px;font-size:11px;line-height:12px;color:#000;letter-spacing:-0.8px;">TEMELFATURA</div>
<div class="t" style="left:143.5px;top:225px;font-size:11px;line-height:12px;color:#000;letter-spacing:-0.3px;">SATIS</div>
<div class="t" style="left:244.5px;top:225px;font-size:11px;line-height:12px;color:#0000ff;letter-spacing:-0.05px;text-decoration:underline;">TRN2024000000...</div>
<div class="t" style="left:347.5px;top:225px;font-size:11px;line-height:12px;color:#000;letter-spacing:0.25px;">2.04.2024</div>
<div class="t" style="left:446.5px;top:225px;font-size:11px;line-height:12px;color:#000;letter-spacing:-0.5px;">HKS SENTETİK T...</div>
<div class="t" style="left:625.5px;top:225px;font-size:11px;line-height:12px;color:#000;letter-spacing:-0.6px;">BEKLEMEDE - SA...</div>
<div class="t" style="left:723.35px;width:95px;text-align:right;top:225px;font-size:11px;line-height:12px;color:#000;letter-spacing:0.35px;">59.842,31</div>
<div class="t" style="left:823.35px;width:95px;text-align:right;top:225px;font-size:11px;line-height:12px;color:#000;letter-spacing:0.35px;">3.157,69</div>
<div class="t" style="left:923.35px;width:95px;text-align:right;top:225px;font-size:11px;line-height:12px;color:#000;letter-spacing:0.35px;">63.000,00</div>
<div class="t" style="left:1123.35px;width:95px;text-align:right;top:225px;font-size:11px;line-height:12px;color:#000;letter-spacing:0.35px;">13.469,81</div>
<div class="t" style="left:1323.35px;width:95px;text-align:right;top:225px;font-size:11px;line-height:12px;color:#000;letter-spacing:0.35px;">2.693,96</div>
<div class="t" style="left:1623.35px;width:95px;text-align:right;top:225px;font-size:11px;line-height:12px;color:#000;letter-spacing:0.35px;">0,00</div>
<div class="t" style="left:1225px;top:225px;font-size:11px;line-height:12px;color:#000;letter-spacing:0.1px;">600.20</div>
<div class="t" style="left:1425px;top:225px;font-size:11px;line-height:12px;color:#000;letter-spacing:0.1px;">391.20</div>
<div class="t" style="left:1725px;top:225px;font-size:11px;line-height:12px;color:#000;letter-spacing:0.1px;">600.18</div>
<div class="r" style="left:3px;top:263px;width:36px;height:1px;background:#a0a0a0;"></div>
<div class="r" style="left:41px;top:263px;width:1852px;height:1px;background:#a0a0a0;"></div>
<div class="t" style="left:8.5px;width:30px;text-align:center;top:247px;font-size:11px;line-height:12px;color:#000;">12</div>
<div class="t" style="left:43.5px;top:247px;font-size:11px;line-height:12px;color:#000;letter-spacing:-0.8px;">TEMELFATURA</div>
<div class="t" style="left:143.5px;top:247px;font-size:11px;line-height:12px;color:#000;letter-spacing:-0.3px;">SATIS</div>
<div class="t" style="left:244.5px;top:247px;font-size:11px;line-height:12px;color:#0000ff;letter-spacing:-0.05px;text-decoration:underline;">TRN2024000000...</div>
<div class="t" style="left:347.5px;top:247px;font-size:11px;line-height:12px;color:#000;letter-spacing:0.25px;">3.04.2024</div>
<div class="t" style="left:446.5px;top:247px;font-size:11px;line-height:12px;color:#000;letter-spacing:-0.5px;">BİGA GÜÇLÜ GI...</div>
<div class="t" style="left:547px;top:247px;font-size:11px;line-height:12px;color:#000;letter-spacing:0.2px;">120.170029...</div>
<div class="t" style="left:625.5px;top:247px;font-size:11px;line-height:12px;color:#000;letter-spacing:-0.6px;">BEKLEMEDE - SA...</div>
<div class="t" style="left:723.35px;width:95px;text-align:right;top:247px;font-size:11px;line-height:12px;color:#000;letter-spacing:0.35px;">126.668,24</div>
<div class="t" style="left:823.35px;width:95px;text-align:right;top:247px;font-size:11px;line-height:12px;color:#000;letter-spacing:0.35px;">1.266,68</div>
<div class="t" style="left:923.35px;width:95px;text-align:right;top:247px;font-size:11px;line-height:12px;color:#000;letter-spacing:0.35px;">127.934,92</div>
<div class="t" style="left:1123.35px;width:95px;text-align:right;top:247px;font-size:11px;line-height:12px;color:#000;letter-spacing:0.35px;">0,00</div>
<div class="t" style="left:1323.35px;width:95px;text-align:right;top:247px;font-size:11px;line-height:12px;color:#000;letter-spacing:0.35px;">0,00</div>
<div class="t" style="left:1623.35px;width:95px;text-align:right;top:247px;font-size:11px;line-height:12px;color:#000;letter-spacing:0.35px;">0,00</div>
<div class="t" style="left:1225px;top:247px;font-size:11px;line-height:12px;color:#000;letter-spacing:0.1px;">600.20</div>
<div class="t" style="left:1425px;top:247px;font-size:11px;line-height:12px;color:#000;letter-spacing:0.1px;">391.20</div>
<div class="t" style="left:1725px;top:247px;font-size:11px;line-height:12px;color:#000;letter-spacing:0.1px;">600.18</div>
<div class="r" style="left:3px;top:285px;width:36px;height:1px;background:#a0a0a0;"></div>
<div class="r" style="left:41px;top:285px;width:1852px;height:1px;background:#a0a0a0;"></div>
<div class="t" style="left:8.5px;width:30px;text-align:center;top:269px;font-size:11px;line-height:12px;color:#000;">13</div>
<div class="t" style="left:43.5px;top:269px;font-size:11px;line-height:12px;color:#000;letter-spacing:-0.8px;">TEMELFATURA</div>
<div class="t" style="left:143.5px;top:269px;font-size:11px;line-height:12px;color:#000;letter-spacing:-0.3px;">SATIS</div>
<div class="t" style="left:244.5px;top:269px;font-size:11px;line-height:12px;color:#0000ff;letter-spacing:-0.05px;text-decoration:underline;">TRN2024000000...</div>
<div class="t" style="left:347.5px;top:269px;font-size:11px;line-height:12px;color:#000;letter-spacing:0.25px;">4.04.2024</div>
<div class="t" style="left:446.5px;top:269px;font-size:11px;line-height:12px;color:#000;letter-spacing:-0.5px;">MULTINET KURU...</div>
<div class="t" style="left:547px;top:269px;font-size:11px;line-height:12px;color:#000;letter-spacing:0.2px;">120.623009...</div>
<div class="t" style="left:625.5px;top:269px;font-size:11px;line-height:12px;color:#000;letter-spacing:-0.6px;">ONAYLANDI - S...</div>
<div class="t" style="left:723.35px;width:95px;text-align:right;top:269px;font-size:11px;line-height:12px;color:#000;letter-spacing:0.35px;">26,73</div>
<div class="t" style="left:823.35px;width:95px;text-align:right;top:269px;font-size:11px;line-height:12px;color:#000;letter-spacing:0.35px;">0,27</div>
<div class="t" style="left:923.35px;width:95px;text-align:right;top:269px;font-size:11px;line-height:12px;color:#000;letter-spacing:0.35px;">27,00</div>
<div class="t" style="left:1123.35px;width:95px;text-align:right;top:269px;font-size:11px;line-height:12px;color:#000;letter-spacing:0.35px;">0,00</div>
<div class="t" style="left:1323.35px;width:95px;text-align:right;top:269px;font-size:11px;line-height:12px;color:#000;letter-spacing:0.35px;">0,00</div>
<div class="t" style="left:1623.35px;width:95px;text-align:right;top:269px;font-size:11px;line-height:12px;color:#000;letter-spacing:0.35px;">0,00</div>
<div class="t" style="left:1225px;top:269px;font-size:11px;line-height:12px;color:#000;letter-spacing:0.1px;">600.20</div>
<div class="t" style="left:1425px;top:269px;font-size:11px;line-height:12px;color:#000;letter-spacing:0.1px;">391.20</div>
<div class="t" style="left:1725px;top:269px;font-size:11px;line-height:12px;color:#000;letter-spacing:0.1px;">600.18</div>
<div class="r" style="left:3px;top:307px;width:36px;height:1px;background:#a0a0a0;"></div>
<div class="r" style="left:41px;top:286px;width:1852px;height:21px;background:#ff4500;"></div>
<div class="r" style="left:41px;top:307px;width:1852px;height:1px;background:#a0a0a0;"></div>
<div class="t" style="left:8.5px;width:30px;text-align:center;top:291px;font-size:11px;line-height:12px;color:#000;">14</div>
<div class="t" style="left:43.5px;top:291px;font-size:11px;line-height:12px;color:#000;letter-spacing:-0.8px;">TEMELFATURA</div>
<div class="t" style="left:143.5px;top:291px;font-size:11px;line-height:12px;color:#000;letter-spacing:-0.3px;">IADE</div>
<div class="t" style="left:244.5px;top:291px;font-size:11px;line-height:12px;color:#0000ff;letter-spacing:-0.05px;text-decoration:underline;">TRN2024000000...</div>
<div class="t" style="left:347.5px;top:291px;font-size:11px;line-height:12px;color:#000;letter-spacing:0.25px;">4.04.2024</div>
<div class="t" style="left:446.5px;top:291px;font-size:11px;line-height:12px;color:#000;letter-spacing:-0.5px;">KÖSELECİLER GI...</div>
<div class="t" style="left:625.5px;top:291px;font-size:11px;line-height:12px;color:#000;letter-spacing:-0.6px;">BEKLEMEDE - IA...</div>
<div class="t" style="left:723.35px;width:95px;text-align:right;top:291px;font-size:11px;line-height:12px;color:#000;letter-spacing:0.35px;">2.231,46</div>
<div class="t" style="left:823.35px;width:95px;text-align:right;top:291px;font-size:11px;line-height:12px;color:#000;letter-spacing:0.35px;">22,32</div>
<div class="t" style="left:923.35px;width:95px;text-align:right;top:291px;font-size:11px;line-height:12px;color:#000;letter-spacing:0.35px;">2.253,78</div>
<div class="t" style="left:1123.35px;width:95px;text-align:right;top:291px;font-size:11px;line-height:12px;color:#000;letter-spacing:0.35px;">0,00</div>
<div class="t" style="left:1323.35px;width:95px;text-align:right;top:291px;font-size:11px;line-height:12px;color:#000;letter-spacing:0.35px;">0,00</div>
<div class="t" style="left:1623.35px;width:95px;text-align:right;top:291px;font-size:11px;line-height:12px;color:#000;letter-spacing:0.35px;">0,00</div>
<div class="t" style="left:1225px;top:291px;font-size:11px;line-height:12px;color:#000;letter-spacing:0.1px;">153.20</div>
<div class="t" style="left:1425px;top:291px;font-size:11px;line-height:12px;color:#000;letter-spacing:0.1px;">391.20</div>
<div class="t" style="left:1725px;top:291px;font-size:11px;line-height:12px;color:#000;letter-spacing:0.1px;">153.18</div>
<div class="r" style="left:3px;top:329px;width:36px;height:1px;background:#a0a0a0;"></div>
<div class="r" style="left:41px;top:308px;width:1852px;height:21px;background:#ff4500;"></div>
<div class="r" style="left:41px;top:329px;width:1852px;height:1px;background:#a0a0a0;"></div>
<div class="t" style="left:8.5px;width:30px;text-align:center;top:313px;font-size:11px;line-height:12px;color:#000;">15</div>
<div class="t" style="left:43.5px;top:313px;font-size:11px;line-height:12px;color:#000;letter-spacing:-0.8px;">TEMELFATURA</div>
<div class="t" style="left:143.5px;top:313px;font-size:11px;line-height:12px;color:#000;letter-spacing:-0.3px;">IADE</div>
<div class="t" style="left:244.5px;top:313px;font-size:11px;line-height:12px;color:#0000ff;letter-spacing:-0.05px;text-decoration:underline;">TRN2024000000...</div>
<div class="t" style="left:347.5px;top:313px;font-size:11px;line-height:12px;color:#000;letter-spacing:0.25px;">5.04.2024</div>
<div class="t" style="left:446.5px;top:313px;font-size:11px;line-height:12px;color:#000;letter-spacing:-0.5px;">KÖSELECİLER GI...</div>
<div class="t" style="left:625.5px;top:313px;font-size:11px;line-height:12px;color:#000;letter-spacing:-0.6px;">BEKLEMEDE - IA...</div>
<div class="t" style="left:723.35px;width:95px;text-align:right;top:313px;font-size:11px;line-height:12px;color:#000;letter-spacing:0.35px;">299,88</div>
<div class="t" style="left:823.35px;width:95px;text-align:right;top:313px;font-size:11px;line-height:12px;color:#000;letter-spacing:0.35px;">3,00</div>
<div class="t" style="left:923.35px;width:95px;text-align:right;top:313px;font-size:11px;line-height:12px;color:#000;letter-spacing:0.35px;">302,88</div>
<div class="t" style="left:1123.35px;width:95px;text-align:right;top:313px;font-size:11px;line-height:12px;color:#000;letter-spacing:0.35px;">0,00</div>
<div class="t" style="left:1323.35px;width:95px;text-align:right;top:313px;font-size:11px;line-height:12px;color:#000;letter-spacing:0.35px;">0,00</div>
<div class="t" style="left:1623.35px;width:95px;text-align:right;top:313px;font-size:11px;line-height:12px;color:#000;letter-spacing:0.35px;">0,00</div>
<div class="t" style="left:1225px;top:313px;font-size:11px;line-height:12px;color:#000;letter-spacing:0.1px;">153.20</div>
<div class="t" style="left:1425px;top:313px;font-size:11px;line-height:12px;color:#000;letter-spacing:0.1px;">391.20</div>
<div class="t" style="left:1725px;top:313px;font-size:11px;line-height:12px;color:#000;letter-spacing:0.1px;">153.18</div>
<div class="r" style="left:3px;top:351px;width:36px;height:1px;background:#a0a0a0;"></div>
<div class="r" style="left:41px;top:351px;width:1852px;height:1px;background:#a0a0a0;"></div>
<div class="t" style="left:8.5px;width:30px;text-align:center;top:335px;font-size:11px;line-height:12px;color:#000;">16</div>
<div class="t" style="left:43.5px;top:335px;font-size:11px;line-height:12px;color:#000;letter-spacing:-0.8px;">TEMELFATURA</div>
<div class="t" style="left:143.5px;top:335px;font-size:11px;line-height:12px;color:#000;letter-spacing:-0.3px;">SATIS</div>
<div class="t" style="left:244.5px;top:335px;font-size:11px;line-height:12px;color:#0000ff;letter-spacing:-0.05px;text-decoration:underline;">TRN2024000000...</div>
<div class="t" style="left:347.5px;top:335px;font-size:11px;line-height:12px;color:#000;letter-spacing:0.25px;">8.04.2024</div>
<div class="t" style="left:446.5px;top:335px;font-size:11px;line-height:12px;color:#000;letter-spacing:-0.5px;">ÖZCAN SAVUR</div>
<div class="t" style="left:625.5px;top:335px;font-size:11px;line-height:12px;color:#000;letter-spacing:-0.6px;">BEKLEMEDE - SA...</div>
<div class="t" style="left:723.35px;width:95px;text-align:right;top:335px;font-size:11px;line-height:12px;color:#000;letter-spacing:0.35px;">19.801,98</div>
<div class="t" style="left:823.35px;width:95px;text-align:right;top:335px;font-size:11px;line-height:12px;color:#000;letter-spacing:0.35px;">198,02</div>
<div class="t" style="left:923.35px;width:95px;text-align:right;top:335px;font-size:11px;line-height:12px;color:#000;letter-spacing:0.35px;">20.000,00</div>
<div class="t" style="left:1123.35px;width:95px;text-align:right;top:335px;font-size:11px;line-height:12px;color:#000;letter-spacing:0.35px;">0,00</div>
<div class="t" style="left:1323.35px;width:95px;text-align:right;top:335px;font-size:11px;line-height:12px;color:#000;letter-spacing:0.35px;">0,00</div>
<div class="t" style="left:1623.35px;width:95px;text-align:right;top:335px;font-size:11px;line-height:12px;color:#000;letter-spacing:0.35px;">0,00</div>
<div class="t" style="left:1225px;top:335px;font-size:11px;line-height:12px;color:#000;letter-spacing:0.1px;">600.20</div>
<div class="t" style="left:1425px;top:335px;font-size:11px;line-height:12px;color:#000;letter-spacing:0.1px;">391.20</div>
<div class="t" style="left:1725px;top:335px;font-size:11px;line-height:12px;color:#000;letter-spacing:0.1px;">600.18</div>
<div class="r" style="left:3px;top:373px;width:36px;height:1px;background:#a0a0a0;"></div>
<div class="r" style="left:41px;top:373px;width:1852px;height:1px;background:#a0a0a0;"></div>
<div class="t" style="left:8.5px;width:30px;text-align:center;top:357px;font-size:11px;line-height:12px;color:#000;">17</div>
<div class="t" style="left:43.5px;top:357px;font-size:11px;line-height:12px;color:#000;letter-spacing:-0.8px;">TICARIFATURA</div>
<div class="t" style="left:143.5px;top:357px;font-size:11px;line-height:12px;color:#000;letter-spacing:-0.3px;">SATIS</div>
<div class="t" style="left:244.5px;top:357px;font-size:11px;line-height:12px;color:#0000ff;letter-spacing:-0.05px;text-decoration:underline;">TRN2024000000...</div>
<div class="t" style="left:347.5px;top:357px;font-size:11px;line-height:12px;color:#000;letter-spacing:0.25px;">8.04.2024</div>
<div class="t" style="left:446.5px;top:357px;font-size:11px;line-height:12px;color:#000;letter-spacing:-0.5px;">ALTINORDU MA...</div>
<div class="t" style="left:547px;top:357px;font-size:11px;line-height:12px;color:#000;letter-spacing:0.2px;">120.061042...</div>
<div class="t" style="left:625.5px;top:357px;font-size:11px;line-height:12px;color:#000;letter-spacing:-0.6px;">ONAYLANDI - S...</div>
<div class="t" style="left:723.35px;width:95px;text-align:right;top:357px;font-size:11px;line-height:12px;color:#000;letter-spacing:0.35px;">19.189,90</div>
<div class="t" style="left:823.35px;width:95px;text-align:right;top:357px;font-size:11px;line-height:12px;color:#000;letter-spacing:0.35px;">3.419,43</div>
<div class="t" style="left:923.35px;width:95px;text-align:right;top:357px;font-size:11px;line-height:12px;color:#000;letter-spacing:0.35px;">22.609,33</div>
<div class="t" style="left:1123.35px;width:95px;text-align:right;top:357px;font-size:11px;line-height:12px;color:#000;letter-spacing:0.35px;">16.987,00</div>
<div class="t" style="left:1323.35px;width:95px;text-align:right;top:357px;font-size:11px;line-height:12px;color:#000;letter-spacing:0.35px;">3.397,40</div>
<div class="t" style="left:1623.35px;width:95px;text-align:right;top:357px;font-size:11px;line-height:12px;color:#000;letter-spacing:0.35px;">0,00</div>
<div class="t" style="left:1225px;top:357px;font-size:11px;line-height:12px;color:#000;letter-spacing:0.1px;">600.20</div>
<div class="t" style="left:1425px;top:357px;font-size:11px;line-height:12px;color:#000;letter-spacing:0.1px;">391.20</div>
<div class="t" style="left:1725px;top:357px;font-size:11px;line-height:12px;color:#000;letter-spacing:0.1px;">600.18</div>
<div class="r" style="left:3px;top:395px;width:36px;height:1px;background:#a0a0a0;"></div>
<div class="r" style="left:41px;top:395px;width:1852px;height:1px;background:#a0a0a0;"></div>
<div class="t" style="left:8.5px;width:30px;text-align:center;top:379px;font-size:11px;line-height:12px;color:#000;">18</div>
<div class="t" style="left:43.5px;top:379px;font-size:11px;line-height:12px;color:#000;letter-spacing:-0.8px;">TEMELFATURA</div>
<div class="t" style="left:143.5px;top:379px;font-size:11px;line-height:12px;color:#000;letter-spacing:-0.3px;">SATIS</div>
<div class="t" style="left:244.5px;top:379px;font-size:11px;line-height:12px;color:#0000ff;letter-spacing:-0.05px;text-decoration:underline;">TRN2024000000...</div>
<div class="t" style="left:347.5px;top:379px;font-size:11px;line-height:12px;color:#000;letter-spacing:0.25px;">8.04.2024</div>
<div class="t" style="left:446.5px;top:379px;font-size:11px;line-height:12px;color:#000;letter-spacing:-0.5px;">SODEXO AVANT...</div>
<div class="t" style="left:625.5px;top:379px;font-size:11px;line-height:12px;color:#000;letter-spacing:-0.6px;">BEKLEMEDE - SA...</div>
<div class="t" style="left:723.35px;width:95px;text-align:right;top:379px;font-size:11px;line-height:12px;color:#000;letter-spacing:0.35px;">57.954,61</div>
<div class="t" style="left:823.35px;width:95px;text-align:right;top:379px;font-size:11px;line-height:12px;color:#000;letter-spacing:0.35px;">5.795,46</div>
<div class="t" style="left:923.35px;width:95px;text-align:right;top:379px;font-size:11px;line-height:12px;color:#000;letter-spacing:0.35px;">63.750,07</div>
<div class="t" style="left:1123.35px;width:95px;text-align:right;top:379px;font-size:11px;line-height:12px;color:#000;letter-spacing:0.35px;">0,00</div>
<div class="t" style="left:1323.35px;width:95px;text-align:right;top:379px;font-size:11px;line-height:12px;color:#000;letter-spacing:0.35px;">0,00</div>
<div class="t" style="left:1623.35px;width:95px;text-align:right;top:379px;font-size:11px;line-height:12px;color:#000;letter-spacing:0.35px;">0,00</div>
<div class="t" style="left:1225px;top:379px;font-size:11px;line-height:12px;color:#000;letter-spacing:0.1px;">600.20</div>
<div class="t" style="left:1425px;top:379px;font-size:11px;line-height:12px;color:#000;letter-spacing:0.1px;">391.20</div>
<div class="t" style="left:1725px;top:379px;font-size:11px;line-height:12px;color:#000;letter-spacing:0.1px;">600.18</div>
<div class="r" style="left:3px;top:417px;width:36px;height:1px;background:#a0a0a0;"></div>
<div class="r" style="left:41px;top:417px;width:1852px;height:1px;background:#a0a0a0;"></div>
<div class="t" style="left:8.5px;width:30px;text-align:center;top:401px;font-size:11px;line-height:12px;color:#000;">19</div>
<div class="t" style="left:43.5px;top:401px;font-size:11px;line-height:12px;color:#000;letter-spacing:-0.8px;">TEMELFATURA</div>
<div class="t" style="left:143.5px;top:401px;font-size:11px;line-height:12px;color:#000;letter-spacing:-0.3px;">SATIS</div>
<div class="t" style="left:244.5px;top:401px;font-size:11px;line-height:12px;color:#0000ff;letter-spacing:-0.05px;text-decoration:underline;">TRN2024000000...</div>
<div class="t" style="left:347.5px;top:401px;font-size:11px;line-height:12px;color:#000;letter-spacing:0.25px;">8.04.2024</div>
<div class="t" style="left:446.5px;top:401px;font-size:11px;line-height:12px;color:#000;letter-spacing:-0.5px;">SODEXO AVANT...</div>
<div class="t" style="left:625.5px;top:401px;font-size:11px;line-height:12px;color:#000;letter-spacing:-0.6px;">BEKLEMEDE - SA...</div>
<div class="t" style="left:723.35px;width:95px;text-align:right;top:401px;font-size:11px;line-height:12px;color:#000;letter-spacing:0.35px;">8.041,32</div>
<div class="t" style="left:823.35px;width:95px;text-align:right;top:401px;font-size:11px;line-height:12px;color:#000;letter-spacing:0.35px;">80,41</div>
<div class="t" style="left:923.35px;width:95px;text-align:right;top:401px;font-size:11px;line-height:12px;color:#000;letter-spacing:0.35px;">8.121,73</div>
<div class="t" style="left:1123.35px;width:95px;text-align:right;top:401px;font-size:11px;line-height:12px;color:#000;letter-spacing:0.35px;">0,00</div>
<div class="t" style="left:1323.35px;width:95px;text-align:right;top:401px;font-size:11px;line-height:12px;color:#000;letter-spacing:0.35px;">0,00</div>
<div class="t" style="left:1623.35px;width:95px;text-align:right;top:401px;font-size:11px;line-height:12px;color:#000;letter-spacing:0.35px;">0,00</div>
<div class="t" style="left:1225px;top:401px;font-size:11px;line-height:12px;color:#000;letter-spacing:0.1px;">600.20</div>
<div class="t" style="left:1425px;top:401px;font-size:11px;line-height:12px;color:#000;letter-spacing:0.1px;">391.20</div>
<div class="t" style="left:1725px;top:401px;font-size:11px;line-height:12px;color:#000;letter-spacing:0.1px;">600.18</div>
<div class="r" style="left:3px;top:439px;width:36px;height:1px;background:#a0a0a0;"></div>
<div class="r" style="left:41px;top:439px;width:1852px;height:1px;background:#a0a0a0;"></div>
<div class="t" style="left:8.5px;width:30px;text-align:center;top:423px;font-size:11px;line-height:12px;color:#000;">20</div>
<div class="t" style="left:43.5px;top:423px;font-size:11px;line-height:12px;color:#000;letter-spacing:-0.8px;">EARSIVFATURA</div>
<div class="t" style="left:143.5px;top:423px;font-size:11px;line-height:12px;color:#000;letter-spacing:-0.3px;">SATIS</div>
<div class="t" style="left:244.5px;top:423px;font-size:11px;line-height:12px;color:#0000ff;letter-spacing:-0.05px;text-decoration:underline;">TRY2024000000...</div>
<div class="t" style="left:347.5px;top:423px;font-size:11px;line-height:12px;color:#000;letter-spacing:0.25px;">8.04.2024</div>
<div class="t" style="left:446.5px;top:423px;font-size:11px;line-height:12px;color:#000;letter-spacing:-0.5px;">NİDA ÖZDEMİR</div>
<div class="t" style="left:625.5px;top:423px;font-size:11px;line-height:12px;color:#000;letter-spacing:-0.6px;">ONAYLANDI - S...</div>
<div class="t" style="left:723.35px;width:95px;text-align:right;top:423px;font-size:11px;line-height:12px;color:#000;letter-spacing:0.35px;">2.277,22</div>
<div class="t" style="left:823.35px;width:95px;text-align:right;top:423px;font-size:11px;line-height:12px;color:#000;letter-spacing:0.35px;">22,78</div>
<div class="t" style="left:923.35px;width:95px;text-align:right;top:423px;font-size:11px;line-height:12px;color:#000;letter-spacing:0.35px;">2.300,00</div>
<div class="t" style="left:1123.35px;width:95px;text-align:right;top:423px;font-size:11px;line-height:12px;color:#000;letter-spacing:0.35px;">0,00</div>
<div class="t" style="left:1323.35px;width:95px;text-align:right;top:423px;font-size:11px;line-height:12px;color:#000;letter-spacing:0.35px;">0,00</div>
<div class="t" style="left:1623.35px;width:95px;text-align:right;top:423px;font-size:11px;line-height:12px;color:#000;letter-spacing:0.35px;">0,00</div>
<div class="t" style="left:1225px;top:423px;font-size:11px;line-height:12px;color:#000;letter-spacing:0.1px;">600.20</div>
<div class="t" style="left:1425px;top:423px;font-size:11px;line-height:12px;color:#000;letter-spacing:0.1px;">391.20</div>
<div class="t" style="left:1725px;top:423px;font-size:11px;line-height:12px;color:#000;letter-spacing:0.1px;">600.18</div>
<div class="r" style="left:3px;top:461px;width:36px;height:1px;background:#a0a0a0;"></div>
<div class="r" style="left:41px;top:461px;width:1852px;height:1px;background:#a0a0a0;"></div>
<div class="t" style="left:8.5px;width:30px;text-align:center;top:445px;font-size:11px;line-height:12px;color:#000;">21</div>
<div class="t" style="left:43.5px;top:445px;font-size:11px;line-height:12px;color:#000;letter-spacing:-0.8px;">TEMELFATURA</div>
<div class="t" style="left:143.5px;top:445px;font-size:11px;line-height:12px;color:#000;letter-spacing:-0.3px;">SATIS</div>
<div class="t" style="left:244.5px;top:445px;font-size:11px;line-height:12px;color:#0000ff;letter-spacing:-0.05px;text-decoration:underline;">TRN2024000000...</div>
<div class="t" style="left:347.5px;top:445px;font-size:11px;line-height:12px;color:#000;letter-spacing:0.25px;">15.04.2024</div>
<div class="t" style="left:446.5px;top:445px;font-size:11px;line-height:12px;color:#000;letter-spacing:-0.5px;">BİGA GÜÇLÜ GI...</div>
<div class="t" style="left:547px;top:445px;font-size:11px;line-height:12px;color:#000;letter-spacing:0.2px;">120.170029...</div>
<div class="t" style="left:625.5px;top:445px;font-size:11px;line-height:12px;color:#000;letter-spacing:-0.6px;">BEKLEMEDE - SA...</div>
<div class="t" style="left:723.35px;width:95px;text-align:right;top:445px;font-size:11px;line-height:12px;color:#000;letter-spacing:0.35px;">174.977,90</div>
<div class="t" style="left:823.35px;width:95px;text-align:right;top:445px;font-size:11px;line-height:12px;color:#000;letter-spacing:0.35px;">1.749,79</div>
<div class="t" style="left:923.35px;width:95px;text-align:right;top:445px;font-size:11px;line-height:12px;color:#000;letter-spacing:0.35px;">176.727,69</div>
<div class="t" style="left:1123.35px;width:95px;text-align:right;top:445px;font-size:11px;line-height:12px;color:#000;letter-spacing:0.35px;">0,00</div>
<div class="t" style="left:1323.35px;width:95px;text-align:right;top:445px;font-size:11px;line-height:12px;color:#000;letter-spacing:0.35px;">0,00</div>
<div class="t" style="left:1623.35px;width:95px;text-align:right;top:445px;font-size:11px;line-height:12px;color:#000;letter-spacing:0.35px;">0,00</div>
<div class="t" style="left:1225px;top:445px;font-size:11px;line-height:12px;color:#000;letter-spacing:0.1px;">600.20</div>
<div class="t" style="left:1425px;top:445px;font-size:11px;line-height:12px;color:#000;letter-spacing:0.1px;">391.20</div>
<div class="t" style="left:1725px;top:445px;font-size:11px;line-height:12px;color:#000;letter-spacing:0.1px;">600.18</div>
<div class="r" style="left:3px;top:483px;width:36px;height:1px;background:#a0a0a0;"></div>
<div class="r" style="left:41px;top:483px;width:1852px;height:1px;background:#a0a0a0;"></div>
<div class="t" style="left:8.5px;width:30px;text-align:center;top:467px;font-size:11px;line-height:12px;color:#000;">22</div>
<div class="t" style="left:43.5px;top:467px;font-size:11px;line-height:12px;color:#000;letter-spacing:-0.8px;">TEMELFATURA</div>
<div class="t" style="left:143.5px;top:467px;font-size:11px;line-height:12px;color:#000;letter-spacing:-0.3px;">SATIS</div>
<div class="t" style="left:244.5px;top:467px;font-size:11px;line-height:12px;color:#0000ff;letter-spacing:-0.05px;text-decoration:underline;">TRN2024000000...</div>
<div class="t" style="left:347.5px;top:467px;font-size:11px;line-height:12px;color:#000;letter-spacing:0.25px;">15.04.2024</div>
<div class="t" style="left:446.5px;top:467px;font-size:11px;line-height:12px;color:#000;letter-spacing:-0.5px;">ERDAL TİCARET...</div>
<div class="t" style="left:625.5px;top:467px;font-size:11px;line-height:12px;color:#000;letter-spacing:-0.6px;">BEKLEMEDE - SA...</div>
<div class="t" style="left:723.35px;width:95px;text-align:right;top:467px;font-size:11px;line-height:12px;color:#000;letter-spacing:0.35px;">125,99</div>
<div class="t" style="left:823.35px;width:95px;text-align:right;top:467px;font-size:11px;line-height:12px;color:#000;letter-spacing:0.35px;">3,69</div>
<div class="t" style="left:923.35px;width:95px;text-align:right;top:467px;font-size:11px;line-height:12px;color:#000;letter-spacing:0.35px;">129,68</div>
<div class="t" style="left:1123.35px;width:95px;text-align:right;top:467px;font-size:11px;line-height:12px;color:#000;letter-spacing:0.35px;">0,00</div>
<div class="t" style="left:1323.35px;width:95px;text-align:right;top:467px;font-size:11px;line-height:12px;color:#000;letter-spacing:0.35px;">0,00</div>
<div class="t" style="left:1623.35px;width:95px;text-align:right;top:467px;font-size:11px;line-height:12px;color:#000;letter-spacing:0.35px;">0,00</div>
<div class="t" style="left:1225px;top:467px;font-size:11px;line-height:12px;color:#000;letter-spacing:0.1px;">600.20</div>
<div class="t" style="left:1425px;top:467px;font-size:11px;line-height:12px;color:#000;letter-spacing:0.1px;">391.20</div>
<div class="t" style="left:1725px;top:467px;font-size:11px;line-height:12px;color:#000;letter-spacing:0.1px;">600.18</div>
<div class="r" style="left:3px;top:505px;width:36px;height:1px;background:#a0a0a0;"></div>
<div class="r" style="left:41px;top:484px;width:1852px;height:21px;background:#ff4500;"></div>
<div class="r" style="left:41px;top:505px;width:1852px;height:1px;background:#a0a0a0;"></div>
<div class="t" style="left:8.5px;width:30px;text-align:center;top:489px;font-size:11px;line-height:12px;color:#000;">23</div>
<div class="t" style="left:43.5px;top:489px;font-size:11px;line-height:12px;color:#000;letter-spacing:-0.8px;">TEMELFATURA</div>
<div class="t" style="left:143.5px;top:489px;font-size:11px;line-height:12px;color:#000;letter-spacing:-0.3px;">IADE</div>
<div class="t" style="left:244.5px;top:489px;font-size:11px;line-height:12px;color:#0000ff;letter-spacing:-0.05px;text-decoration:underline;">TRN2024000000...</div>
<div class="t" style="left:347.5px;top:489px;font-size:11px;line-height:12px;color:#000;letter-spacing:0.25px;">15.04.2024</div>
<div class="t" style="left:446.5px;top:489px;font-size:11px;line-height:12px;color:#000;letter-spacing:-0.5px;">ECEGIDA PAZAR...</div>
<div class="t" style="left:625.5px;top:489px;font-size:11px;line-height:12px;color:#000;letter-spacing:-0.6px;">BEKLEMEDE - IA...</div>
<div class="t" style="left:723.35px;width:95px;text-align:right;top:489px;font-size:11px;line-height:12px;color:#000;letter-spacing:0.35px;">209,11</div>
<div class="t" style="left:823.35px;width:95px;text-align:right;top:489px;font-size:11px;line-height:12px;color:#000;letter-spacing:0.35px;">2,09</div>
<div class="t" style="left:923.35px;width:95px;text-align:right;top:489px;font-size:11px;line-height:12px;color:#000;letter-spacing:0.35px;">211,20</div>
<div class="t" style="left:1123.35px;width:95px;text-align:right;top:489px;font-size:11px;line-height:12px;color:#000;letter-spacing:0.35px;">0,00</div>
<div class="t" style="left:1323.35px;width:95px;text-align:right;top:489px;font-size:11px;line-height:12px;color:#000;letter-spacing:0.35px;">0,00</div>
<div class="t" style="left:1623.35px;width:95px;text-align:right;top:489px;font-size:11px;line-height:12px;color:#000;letter-spacing:0.35px;">0,00</div>
<div class="t" style="left:1225px;top:489px;font-size:11px;line-height:12px;color:#000;letter-spacing:0.1px;">153.20</div>
<div class="t" style="left:1425px;top:489px;font-size:11px;line-height:12px;color:#000;letter-spacing:0.1px;">391.20</div>
<div class="t" style="left:1725px;top:489px;font-size:11px;line-height:12px;color:#000;letter-spacing:0.1px;">153.18</div>
<div class="r" style="left:3px;top:527px;width:36px;height:1px;background:#a0a0a0;"></div>
<div class="r" style="left:41px;top:527px;width:1852px;height:1px;background:#a0a0a0;"></div>
<div class="t" style="left:8.5px;width:30px;text-align:center;top:511px;font-size:11px;line-height:12px;color:#000;">24</div>
<div class="t" style="left:43.5px;top:511px;font-size:11px;line-height:12px;color:#000;letter-spacing:-0.8px;">TEMELFATURA</div>
<div class="t" style="left:143.5px;top:511px;font-size:11px;line-height:12px;color:#000;letter-spacing:-0.3px;">SATIS</div>
<div class="t" style="left:244.5px;top:511px;font-size:11px;line-height:12px;color:#0000ff;letter-spacing:-0.05px;text-decoration:underline;">TRN2024000000...</div>
<div class="t" style="left:347.5px;top:511px;font-size:11px;line-height:12px;color:#000;letter-spacing:0.25px;">15.04.2024</div>
<div class="t" style="left:446.5px;top:511px;font-size:11px;line-height:12px;color:#000;letter-spacing:-0.5px;">ARAS KARGO Y...</div>
<div class="t" style="left:547px;top:511px;font-size:11px;line-height:12px;color:#000;letter-spacing:0.2px;">120.072003...</div>
<div class="t" style="left:625.5px;top:511px;font-size:11px;line-height:12px;color:#000;letter-spacing:-0.6px;">BEKLEMEDE - SA...</div>
<div class="t" style="left:723.35px;width:95px;text-align:right;top:511px;font-size:11px;line-height:12px;color:#000;letter-spacing:0.35px;">445,00</div>
<div class="t" style="left:823.35px;width:95px;text-align:right;top:511px;font-size:11px;line-height:12px;color:#000;letter-spacing:0.35px;">89,00</div>
<div class="t" style="left:923.35px;width:95px;text-align:right;top:511px;font-size:11px;line-height:12px;color:#000;letter-spacing:0.35px;">534,00</div>
<div class="t" style="left:1123.35px;width:95px;text-align:right;top:511px;font-size:11px;line-height:12px;color:#000;letter-spacing:0.35px;">445,00</div>
<div class="t" style="left:1323.35px;width:95px;text-align:right;top:511px;font-size:11px;line-height:12px;color:#000;letter-spacing:0.35px;">89,00</div>
<div class="t" style="left:1623.35px;width:95px;text-align:right;top:511px;font-size:11px;line-height:12px;color:#000;letter-spacing:0.35px;">0,00</div>
<div class="t" style="left:1225px;top:511px;font-size:11px;line-height:12px;color:#000;letter-spacing:0.1px;">600.20</div>
<div class="t" style="left:1425px;top:511px;font-size:11px;line-height:12px;color:#000;letter-spacing:0.1px;">391.20</div>
<div class="t" style="left:1725px;top:511px;font-size:11px;line-height:12px;color:#000;letter-spacing:0.1px;">600.18</div>
<div class="r" style="left:3px;top:549px;width:36px;height:1px;background:#a0a0a0;"></div>
<div class="r" style="left:41px;top:549px;width:1852px;height:1px;background:#a0a0a0;"></div>
<div class="t" style="left:8.5px;width:30px;text-align:center;top:533px;font-size:11px;line-height:12px;color:#000;">25</div>
<div class="t" style="left:43.5px;top:533px;font-size:11px;line-height:12px;color:#000;letter-spacing:-0.8px;">EARSIVFATURA</div>
<div class="t" style="left:143.5px;top:533px;font-size:11px;line-height:12px;color:#000;letter-spacing:-0.3px;">SATIS</div>
<div class="t" style="left:244.5px;top:533px;font-size:11px;line-height:12px;color:#0000ff;letter-spacing:-0.05px;text-decoration:underline;">TRY2024000000...</div>
<div class="t" style="left:347.5px;top:533px;font-size:11px;line-height:12px;color:#000;letter-spacing:0.25px;">15.04.2024</div>
<div class="t" style="left:446.5px;top:533px;font-size:11px;line-height:12px;color:#000;letter-spacing:-0.5px;">ONUR HAYRİ US...</div>
<div class="t" style="left:625.5px;top:533px;font-size:11px;line-height:12px;color:#000;letter-spacing:-0.6px;">ONAYLANDI - S...</div>
<div class="t" style="left:723.35px;width:95px;text-align:right;top:533px;font-size:11px;line-height:12px;color:#000;letter-spacing:0.35px;">831,40</div>
<div class="t" style="left:823.35px;width:95px;text-align:right;top:533px;font-size:11px;line-height:12px;color:#000;letter-spacing:0.35px;">8,31</div>
<div class="t" style="left:923.35px;width:95px;text-align:right;top:533px;font-size:11px;line-height:12px;color:#000;letter-spacing:0.35px;">839,71</div>
<div class="t" style="left:1123.35px;width:95px;text-align:right;top:533px;font-size:11px;line-height:12px;color:#000;letter-spacing:0.35px;">0,00</div>
<div class="t" style="left:1323.35px;width:95px;text-align:right;top:533px;font-size:11px;line-height:12px;color:#000;letter-spacing:0.35px;">0,00</div>
<div class="t" style="left:1623.35px;width:95px;text-align:right;top:533px;font-size:11px;line-height:12px;color:#000;letter-spacing:0.35px;">0,00</div>
<div class="t" style="left:1225px;top:533px;font-size:11px;line-height:12px;color:#000;letter-spacing:0.1px;">600.20</div>
<div class="t" style="left:1425px;top:533px;font-size:11px;line-height:12px;color:#000;letter-spacing:0.1px;">391.20</div>
<div class="t" style="left:1725px;top:533px;font-size:11px;line-height:12px;color:#000;letter-spacing:0.1px;">600.18</div>
<div class="r" style="left:3px;top:571px;width:36px;height:1px;background:#a0a0a0;"></div>
<div class="r" style="left:41px;top:571px;width:1852px;height:1px;background:#a0a0a0;"></div>
<div class="t" style="left:8.5px;width:30px;text-align:center;top:555px;font-size:11px;line-height:12px;color:#000;">26</div>
<div class="t" style="left:43.5px;top:555px;font-size:11px;line-height:12px;color:#000;letter-spacing:-0.8px;">EARSIVFATURA</div>
<div class="t" style="left:143.5px;top:555px;font-size:11px;line-height:12px;color:#000;letter-spacing:-0.3px;">SATIS</div>
<div class="t" style="left:244.5px;top:555px;font-size:11px;line-height:12px;color:#0000ff;letter-spacing:-0.05px;text-decoration:underline;">TRY2024000000...</div>
<div class="t" style="left:347.5px;top:555px;font-size:11px;line-height:12px;color:#000;letter-spacing:0.25px;">15.04.2024</div>
<div class="t" style="left:446.5px;top:555px;font-size:11px;line-height:12px;color:#000;letter-spacing:-0.5px;">ONUR HAYRİ US...</div>
<div class="t" style="left:625.5px;top:555px;font-size:11px;line-height:12px;color:#000;letter-spacing:-0.6px;">ONAYLANDI - S...</div>
<div class="t" style="left:723.35px;width:95px;text-align:right;top:555px;font-size:11px;line-height:12px;color:#000;letter-spacing:0.35px;">703,96</div>
<div class="t" style="left:823.35px;width:95px;text-align:right;top:555px;font-size:11px;line-height:12px;color:#000;letter-spacing:0.35px;">7,04</div>
<div class="t" style="left:923.35px;width:95px;text-align:right;top:555px;font-size:11px;line-height:12px;color:#000;letter-spacing:0.35px;">711,00</div>
<div class="t" style="left:1123.35px;width:95px;text-align:right;top:555px;font-size:11px;line-height:12px;color:#000;letter-spacing:0.35px;">0,00</div>
<div class="t" style="left:1323.35px;width:95px;text-align:right;top:555px;font-size:11px;line-height:12px;color:#000;letter-spacing:0.35px;">0,00</div>
<div class="t" style="left:1623.35px;width:95px;text-align:right;top:555px;font-size:11px;line-height:12px;color:#000;letter-spacing:0.35px;">0,00</div>
<div class="t" style="left:1225px;top:555px;font-size:11px;line-height:12px;color:#000;letter-spacing:0.1px;">600.20</div>
<div class="t" style="left:1425px;top:555px;font-size:11px;line-height:12px;color:#000;letter-spacing:0.1px;">391.20</div>
<div class="t" style="left:1725px;top:555px;font-size:11px;line-height:12px;color:#000;letter-spacing:0.1px;">600.18</div>
<div class="r" style="left:3px;top:593px;width:36px;height:1px;background:#a0a0a0;"></div>
<div class="r" style="left:41px;top:593px;width:1852px;height:1px;background:#a0a0a0;"></div>
<div class="t" style="left:8.5px;width:30px;text-align:center;top:577px;font-size:11px;line-height:12px;color:#000;">27</div>
<div class="t" style="left:43.5px;top:577px;font-size:11px;line-height:12px;color:#000;letter-spacing:-0.8px;">EARSIVFATURA</div>
<div class="t" style="left:143.5px;top:577px;font-size:11px;line-height:12px;color:#000;letter-spacing:-0.3px;">SATIS</div>
<div class="t" style="left:244.5px;top:577px;font-size:11px;line-height:12px;color:#0000ff;letter-spacing:-0.05px;text-decoration:underline;">TRY2024000000...</div>
<div class="t" style="left:347.5px;top:577px;font-size:11px;line-height:12px;color:#000;letter-spacing:0.25px;">15.04.2024</div>
<div class="t" style="left:446.5px;top:577px;font-size:11px;line-height:12px;color:#000;letter-spacing:-0.5px;">HIZIRELİ SOSYA...</div>
<div class="t" style="left:625.5px;top:577px;font-size:11px;line-height:12px;color:#000;letter-spacing:-0.6px;">ONAYLANDI - S...</div>
<div class="t" style="left:723.35px;width:95px;text-align:right;top:577px;font-size:11px;line-height:12px;color:#000;letter-spacing:0.35px;">79.208,30</div>
<div class="t" style="left:823.35px;width:95px;text-align:right;top:577px;font-size:11px;line-height:12px;color:#000;letter-spacing:0.35px;">792,08</div>
<div class="t" style="left:923.35px;width:95px;text-align:right;top:577px;font-size:11px;line-height:12px;color:#000;letter-spacing:0.35px;">80.000,38</div>
<div class="t" style="left:1123.35px;width:95px;text-align:right;top:577px;font-size:11px;line-height:12px;color:#000;letter-spacing:0.35px;">0,00</div>
<div class="t" style="left:1323.35px;width:95px;text-align:right;top:577px;font-size:11px;line-height:12px;color:#000;letter-spacing:0.35px;">0,00</div>
<div class="t" style="left:1623.35px;width:95px;text-align:right;top:577px;font-size:11px;line-height:12px;color:#000;letter-spacing:0.35px;">0,00</div>
<div class="t" style="left:1225px;top:577px;font-size:11px;line-height:12px;color:#000;letter-spacing:0.1px;">600.20</div>
<div class="t" style="left:1425px;top:577px;font-size:11px;line-height:12px;color:#000;letter-spacing:0.1px;">391.20</div>
<div class="t" style="left:1725px;top:577px;font-size:11px;line-height:12px;color:#000;letter-spacing:0.1px;">600.18</div>
<div class="r" style="left:3px;top:615px;width:36px;height:1px;background:#a0a0a0;"></div>
<div class="r" style="left:41px;top:615px;width:1852px;height:1px;background:#a0a0a0;"></div>
<div class="t" style="left:8.5px;width:30px;text-align:center;top:599px;font-size:11px;line-height:12px;color:#000;">28</div>
<div class="t" style="left:43.5px;top:599px;font-size:11px;line-height:12px;color:#000;letter-spacing:-0.8px;">TICARIFATURA</div>
<div class="t" style="left:143.5px;top:599px;font-size:11px;line-height:12px;color:#000;letter-spacing:-0.3px;">SATIS</div>
<div class="t" style="left:244.5px;top:599px;font-size:11px;line-height:12px;color:#0000ff;letter-spacing:-0.05px;text-decoration:underline;">TRN2024000000...</div>
<div class="t" style="left:347.5px;top:599px;font-size:11px;line-height:12px;color:#000;letter-spacing:0.25px;">16.04.2024</div>
<div class="t" style="left:446.5px;top:599px;font-size:11px;line-height:12px;color:#000;letter-spacing:-0.5px;">ALTINORDU MA...</div>
<div class="t" style="left:547px;top:599px;font-size:11px;line-height:12px;color:#000;letter-spacing:0.2px;">120.061042...</div>
<div class="t" style="left:625.5px;top:599px;font-size:11px;line-height:12px;color:#000;letter-spacing:-0.6px;">ONAYLANDI - S...</div>
<div class="t" style="left:723.35px;width:95px;text-align:right;top:599px;font-size:11px;line-height:12px;color:#000;letter-spacing:0.35px;">52.584,47</div>
<div class="t" style="left:823.35px;width:95px;text-align:right;top:599px;font-size:11px;line-height:12px;color:#000;letter-spacing:0.35px;">652,21</div>
<div class="t" style="left:923.35px;width:95px;text-align:right;top:599px;font-size:11px;line-height:12px;color:#000;letter-spacing:0.35px;">53.236,68</div>
<div class="t" style="left:1123.35px;width:95px;text-align:right;top:599px;font-size:11px;line-height:12px;color:#000;letter-spacing:0.35px;">0,00</div>
<div class="t" style="left:1323.35px;width:95px;text-align:right;top:599px;font-size:11px;line-height:12px;color:#000;letter-spacing:0.35px;">0,00</div>
<div class="t" style="left:1623.35px;width:95px;text-align:right;top:599px;font-size:11px;line-height:12px;color:#000;letter-spacing:0.35px;">0,00</div>
<div class="t" style="left:1225px;top:599px;font-size:11px;line-height:12px;color:#000;letter-spacing:0.1px;">600.20</div>
<div class="t" style="left:1425px;top:599px;font-size:11px;line-height:12px;color:#000;letter-spacing:0.1px;">391.20</div>
<div class="t" style="left:1725px;top:599px;font-size:11px;line-height:12px;color:#000;letter-spacing:0.1px;">600.18</div>
<div class="r" style="left:3px;top:637px;width:36px;height:1px;background:#a0a0a0;"></div>
<div class="r" style="left:41px;top:616px;width:1852px;height:21px;background:#ff4500;"></div>
<div class="r" style="left:41px;top:637px;width:1852px;height:1px;background:#a0a0a0;"></div>
<div class="t" style="left:8.5px;width:30px;text-align:center;top:621px;font-size:11px;line-height:12px;color:#000;">29</div>
<div class="t" style="left:43.5px;top:621px;font-size:11px;line-height:12px;color:#000;letter-spacing:-0.8px;">TEMELFATURA</div>
<div class="t" style="left:143.5px;top:621px;font-size:11px;line-height:12px;color:#000;letter-spacing:-0.3px;">IADE</div>
<div class="t" style="left:244.5px;top:621px;font-size:11px;line-height:12px;color:#0000ff;letter-spacing:-0.05px;text-decoration:underline;">TRN2024000000...</div>
<div class="t" style="left:347.5px;top:621px;font-size:11px;line-height:12px;color:#000;letter-spacing:0.25px;">16.04.2024</div>
<div class="t" style="left:446.5px;top:621px;font-size:11px;line-height:12px;color:#000;letter-spacing:-0.5px;">EKER SÜT ÜRÜN...</div>
<div class="t" style="left:625.5px;top:621px;font-size:11px;line-height:12px;color:#000;letter-spacing:-0.6px;">BEKLEMEDE - IA...</div>
<div class="t" style="left:723.35px;width:95px;text-align:right;top:621px;font-size:11px;line-height:12px;color:#000;letter-spacing:0.35px;">1.701,42</div>
<div class="t" style="left:823.35px;width:95px;text-align:right;top:621px;font-size:11px;line-height:12px;color:#000;letter-spacing:0.35px;">17,00</div>
<div class="t" style="left:923.35px;width:95px;text-align:right;top:621px;font-size:11px;line-height:12px;color:#000;letter-spacing:0.35px;">1.718,42</div>
<div class="t" style="left:1123.35px;width:95px;text-align:right;top:621px;font-size:11px;line-height:12px;color:#000;letter-spacing:0.35px;">0,00</div>
<div class="t" style="left:1323.35px;width:95px;text-align:right;top:621px;font-size:11px;line-height:12px;color:#000;letter-spacing:0.35px;">0,00</div>
<div class="t" style="left:1623.35px;width:95px;text-align:right;top:621px;font-size:11px;line-height:12px;color:#000;letter-spacing:0.35px;">0,00</div>
<div class="t" style="left:1225px;top:621px;font-size:11px;line-height:12px;color:#000;letter-spacing:0.1px;">153.20</div>
<div class="t" style="left:1425px;top:621px;font-size:11px;line-height:12px;color:#000;letter-spacing:0.1px;">391.20</div>
<div class="t" style="left:1725px;top:621px;font-size:11px;line-height:12px;color:#000;letter-spacing:0.1px;">153.18</div>
<div class="r" style="left:3px;top:659px;width:36px;height:1px;background:#a0a0a0;"></div>
<div class="r" style="left:41px;top:659px;width:1852px;height:1px;background:#a0a0a0;"></div>
<div class="t" style="left:8.5px;width:30px;text-align:center;top:643px;font-size:11px;line-height:12px;color:#000;">30</div>
<div class="t" style="left:43.5px;top:643px;font-size:11px;line-height:12px;color:#000;letter-spacing:-0.8px;">TEMELFATURA</div>
<div class="t" style="left:143.5px;top:643px;font-size:11px;line-height:12px;color:#000;letter-spacing:-0.3px;">SATIS</div>
<div class="t" style="left:244.5px;top:643px;font-size:11px;line-height:12px;color:#0000ff;letter-spacing:-0.05px;text-decoration:underline;">TRN2024000000...</div>
<div class="t" style="left:347.5px;top:643px;font-size:11px;line-height:12px;color:#000;letter-spacing:0.25px;">16.04.2024</div>
<div class="t" style="left:446.5px;top:643px;font-size:11px;line-height:12px;color:#000;letter-spacing:-0.5px;">KALE GIDA SAN...</div>
<div class="t" style="left:625.5px;top:643px;font-size:11px;line-height:12px;color:#000;letter-spacing:-0.6px;">BEKLEMEDE - SA...</div>
<div class="t" style="left:723.35px;width:95px;text-align:right;top:643px;font-size:11px;line-height:12px;color:#000;letter-spacing:0.35px;">12.425,13</div>
<div class="t" style="left:823.35px;width:95px;text-align:right;top:643px;font-size:11px;line-height:12px;color:#000;letter-spacing:0.35px;">2.485,03</div>
<div class="t" style="left:923.35px;width:95px;text-align:right;top:643px;font-size:11px;line-height:12px;color:#000;letter-spacing:0.35px;">14.910,16</div>
<div class="t" style="left:1123.35px;width:95px;text-align:right;top:643px;font-size:11px;line-height:12px;color:#000;letter-spacing:0.35px;">12.425,13</div>
<div class="t" style="left:1323.35px;width:95px;text-align:right;top:643px;font-size:11px;line-height:12px;color:#000;letter-spacing:0.35px;">2.485,03</div>
<div class="t" style="left:1623.35px;width:95px;text-align:right;top:643px;font-size:11px;line-height:12px;color:#000;letter-spacing:0.35px;">0,00</div>
<div class="t" style="left:1225px;top:643px;font-size:11px;line-height:12px;color:#000;letter-spacing:0.1px;">600.20</div>
<div class="t" style="left:1425px;top:643px;font-size:11px;line-height:12px;color:#000;letter-spacing:0.1px;">391.20</div>
<div class="t" style="left:1725px;top:643px;font-size:11px;line-height:12px;color:#000;letter-spacing:0.1px;">600.18</div>
<div class="r" style="left:3px;top:681px;width:36px;height:1px;background:#a0a0a0;"></div>
<div class="r" style="left:41px;top:681px;width:1852px;height:1px;background:#a0a0a0;"></div>
<div class="t" style="left:8.5px;width:30px;text-align:center;top:665px;font-size:11px;line-height:12px;color:#000;">31</div>
<div class="t" style="left:43.5px;top:665px;font-size:11px;line-height:12px;color:#000;letter-spacing:-0.8px;">TEMELFATURA</div>
<div class="t" style="left:143.5px;top:665px;font-size:11px;line-height:12px;color:#000;letter-spacing:-0.3px;">SATIS</div>
<div class="t" style="left:244.5px;top:665px;font-size:11px;line-height:12px;color:#0000ff;letter-spacing:-0.05px;text-decoration:underline;">TRN2024000000...</div>
<div class="t" style="left:347.5px;top:665px;font-size:11px;line-height:12px;color:#000;letter-spacing:0.25px;">16.04.2024</div>
<div class="t" style="left:446.5px;top:665px;font-size:11px;line-height:12px;color:#000;letter-spacing:-0.5px;">SERTELLİ İNŞAA...</div>
<div class="t" style="left:625.5px;top:665px;font-size:11px;line-height:12px;color:#000;letter-spacing:-0.6px;">BEKLEMEDE - SA...</div>
<div class="t" style="left:723.35px;width:95px;text-align:right;top:665px;font-size:11px;line-height:12px;color:#000;letter-spacing:0.35px;">1.089,11</div>
<div class="t" style="left:823.35px;width:95px;text-align:right;top:665px;font-size:11px;line-height:12px;color:#000;letter-spacing:0.35px;">10,89</div>
<div class="t" style="left:923.35px;width:95px;text-align:right;top:665px;font-size:11px;line-height:12px;color:#000;letter-spacing:0.35px;">1.100,00</div>
<div class="t" style="left:1123.35px;width:95px;text-align:right;top:665px;font-size:11px;line-height:12px;color:#000;letter-spacing:0.35px;">0,00</div>
<div class="t" style="left:1323.35px;width:95px;text-align:right;top:665px;font-size:11px;line-height:12px;color:#000;letter-spacing:0.35px;">0,00</div>
<div class="t" style="left:1623.35px;width:95px;text-align:right;top:665px;font-size:11px;line-height:12px;color:#000;letter-spacing:0.35px;">0,00</div>
<div class="t" style="left:1225px;top:665px;font-size:11px;line-height:12px;color:#000;letter-spacing:0.1px;">600.20</div>
<div class="t" style="left:1425px;top:665px;font-size:11px;line-height:12px;color:#000;letter-spacing:0.1px;">391.20</div>
<div class="t" style="left:1725px;top:665px;font-size:11px;line-height:12px;color:#000;letter-spacing:0.1px;">600.18</div>
<div class="r" style="left:3px;top:703px;width:36px;height:1px;background:#a0a0a0;"></div>
<div class="r" style="left:41px;top:703px;width:1852px;height:1px;background:#a0a0a0;"></div>
<div class="t" style="left:8.5px;width:30px;text-align:center;top:687px;font-size:11px;line-height:12px;color:#000;">32</div>
<div class="t" style="left:43.5px;top:687px;font-size:11px;line-height:12px;color:#000;letter-spacing:-0.8px;">TEMELFATURA</div>
<div class="t" style="left:143.5px;top:687px;font-size:11px;line-height:12px;color:#000;letter-spacing:-0.3px;">SATIS</div>
<div class="t" style="left:244.5px;top:687px;font-size:11px;line-height:12px;color:#0000ff;letter-spacing:-0.05px;text-decoration:underline;">TRN2024000000...</div>
<div class="t" style="left:347.5px;top:687px;font-size:11px;line-height:12px;color:#000;letter-spacing:0.25px;">16.04.2024</div>
<div class="t" style="left:446.5px;top:687px;font-size:11px;line-height:12px;color:#000;letter-spacing:-0.5px;">EMİNE BOLAN...</div>
<div class="t" style="left:625.5px;top:687px;font-size:11px;line-height:12px;color:#000;letter-spacing:-0.6px;">BEKLEMEDE - SA...</div>
<div class="t" style="left:723.35px;width:95px;text-align:right;top:687px;font-size:11px;line-height:12px;color:#000;letter-spacing:0.35px;">3.713,27</div>
<div class="t" style="left:823.35px;width:95px;text-align:right;top:687px;font-size:11px;line-height:12px;color:#000;letter-spacing:0.35px;">37,13</div>
<div class="t" style="left:923.35px;width:95px;text-align:right;top:687px;font-size:11px;line-height:12px;color:#000;letter-spacing:0.35px;">3.750,40</div>
<div class="t" style="left:1123.35px;width:95px;text-align:right;top:687px;font-size:11px;line-height:12px;color:#000;letter-spacing:0.35px;">0,00</div>
<div class="t" style="left:1323.35px;width:95px;text-align:right;top:687px;font-size:11px;line-height:12px;color:#000;letter-spacing:0.35px;">0,00</div>
<div class="t" style="left:1623.35px;width:95px;text-align:right;top:687px;font-size:11px;line-height:12px;color:#000;letter-spacing:0.35px;">0,00</div>
<div class="t" style="left:1225px;top:687px;font-size:11px;line-height:12px;color:#000;letter-spacing:0.1px;">600.20</div>
<div class="t" style="left:1425px;top:687px;font-size:11px;line-height:12px;color:#000;letter-spacing:0.1px;">391.20</div>
<div class="t" style="left:1725px;top:687px;font-size:11px;line-height:12px;color:#000;letter-spacing:0.1px;">600.18</div>
<div class="r" style="left:140px;top:0px;width:1px;height:690px;background:#a0a0a0;"></div>
<div class="r" style="left:240px;top:0px;width:1px;height:690px;background:#a0a0a0;"></div>
<div class="r" style="left:343px;top:0px;width:1px;height:690px;background:#a0a0a0;"></div>
<div class="r" style="left:443px;top:0px;width:1px;height:690px;background:#a0a0a0;"></div>
<div class="r" style="left:543px;top:0px;width:1px;height:690px;background:#a0a0a0;"></div>
<div class="r" style="left:622px;top:0px;width:1px;height:690px;background:#a0a0a0;"></div>
<div class="r" style="left:722px;top:0px;width:1px;height:690px;background:#a0a0a0;"></div>
<div class="r" style="left:822px;top:0px;width:1px;height:690px;background:#a0a0a0;"></div>
<div class="r" style="left:922px;top:0px;width:1px;height:690px;background:#a0a0a0;"></div>
<div class="r" style="left:1022px;top:0px;width:1px;height:690px;background:#a0a0a0;"></div>
<div class="r" style="left:1122px;top:0px;width:1px;height:690px;background:#a0a0a0;"></div>
<div class="r" style="left:1222px;top:0px;width:1px;height:690px;background:#a0a0a0;"></div>
<div class="r" style="left:1322px;top:0px;width:1px;height:690px;background:#a0a0a0;"></div>
<div class="r" style="left:1422px;top:0px;width:1px;height:690px;background:#a0a0a0;"></div>
<div class="r" style="left:1522px;top:0px;width:1px;height:690px;background:#a0a0a0;"></div>
<div class="r" style="left:1622px;top:0px;width:1px;height:690px;background:#a0a0a0;"></div>
<div class="r" style="left:1722px;top:0px;width:1px;height:690px;background:#a0a0a0;"></div>
<div class="r" style="left:1822px;top:0px;width:1px;height:690px;background:#a0a0a0;"></div>
<div class="r" style="left:40px;top:0px;width:1px;height:690px;background:#a0a0a0;"></div>
</div>
<div class="r" style="left:548px;top:183px;width:79px;height:769px;border:3px solid #0aab36;box-sizing:border-box;"></div>
<div class="r" style="left:1899px;top:184px;width:15px;height:767px;background:#f0f0f0;"></div>
<div class="r" style="left:1899px;top:201px;width:15px;height:306px;background:#cdcdcd;"></div>
<svg class="r" style="left:1902px;top:188px" width="10" height="8" viewBox="0 0 10 8"><path d="M1.5 6L5 2.5L8.5 6" fill="none" stroke="#606060" stroke-width="1.6"/></svg>
<svg class="r" style="left:1902px;top:938px" width="10" height="8" viewBox="0 0 10 8"><path d="M1.5 2L5 5.5L8.5 2" fill="none" stroke="#606060" stroke-width="1.6"/></svg>
<div class="r" style="left:5px;top:951px;width:1894px;height:16px;background:#f0f0f0;"></div>
<div class="r" style="left:22px;top:952px;width:735px;height:15px;background:#cdcdcd;"></div>
<svg class="r" style="left:8px;top:955px" width="8" height="10" viewBox="0 0 8 10"><path d="M6 1.5L2.5 5L6 8.5" fill="none" stroke="#606060" stroke-width="1.6"/></svg>
<svg class="r" style="left:1886px;top:955px" width="8" height="10" viewBox="0 0 8 10"><path d="M2 1.5L5.5 5L2 8.5" fill="none" stroke="#606060" stroke-width="1.6"/></svg>
<div class="r" style="left:1px;top:991px;width:1500px;height:1px;background:#dadada;"></div>
<div class="r" style="left:2px;top:994px;width:88px;height:1px;background:#a0a0a0;"></div>
<div class="r" style="left:2px;top:994px;width:1px;height:17px;background:#a0a0a0;"></div>
<div class="r" style="left:2px;top:1011px;width:89px;height:1px;background:#ffffff;"></div>
<div class="r" style="left:90px;top:994px;width:1px;height:18px;background:#ffffff;"></div>
<div class="r" style="left:166px;top:994px;width:170px;height:1px;background:#a0a0a0;"></div>
<div class="r" style="left:166px;top:994px;width:1px;height:17px;background:#a0a0a0;"></div>
<div class="r" style="left:166px;top:1011px;width:171px;height:1px;background:#ffffff;"></div>
<div class="r" style="left:336px;top:994px;width:1px;height:18px;background:#ffffff;"></div>
<div class="r" style="left:338px;top:994px;width:125px;height:1px;background:#a0a0a0;"></div>
<div class="r" style="left:338px;top:994px;width:1px;height:17px;background:#a0a0a0;"></div>
<div class="r" style="left:338px;top:1011px;width:126px;height:1px;background:#ffffff;"></div>
<div class="r" style="left:463px;top:994px;width:1px;height:18px;background:#ffffff;"></div>
<div class="r" style="left:465px;top:994px;width:106px;height:1px;background:#a0a0a0;"></div>
<div class="r" style="left:465px;top:994px;width:1px;height:17px;background:#a0a0a0;"></div>
<div class="r" style="left:465px;top:1011px;width:107px;height:1px;background:#ffffff;"></div>
<div class="r" style="left:571px;top:994px;width:1px;height:18px;background:#ffffff;"></div>
<div class="r" style="left:573px;top:994px;width:150px;height:1px;background:#a0a0a0;"></div>
<div class="r" style="left:573px;top:994px;width:1px;height:17px;background:#a0a0a0;"></div>
<div class="r" style="left:573px;top:1011px;width:151px;height:1px;background:#ffffff;"></div>
<div class="r" style="left:723px;top:994px;width:1px;height:18px;background:#ffffff;"></div>
<div class="r" style="left:725px;top:994px;width:1px;height:17px;background:#a0a0a0;"></div>
<div class="r" style="left:726px;top:994px;width:1px;height:18px;background:#ffffff;"></div>
<div class="r" style="left:729px;top:994px;width:1px;height:17px;background:#a0a0a0;"></div>
<div class="r" style="left:730px;top:994px;width:1px;height:18px;background:#ffffff;"></div>
<div class="r" style="left:93px;top:995px;width:71px;height:17px;background:#008000;"></div>
<div class="r" style="left:164px;top:995px;width:1px;height:18px;background:#6fbf6f;"></div>
<div class="r" style="left:93px;top:1012px;width:72px;height:1px;background:#6fbf6f;"></div>
<div class="t" style="left:7.5px;top:997px;font-size:11px;line-height:12px;color:#000;letter-spacing:-0.07px;">Fatura Sayısı:74</div>
<div class="t" style="left:101.5px;top:997px;font-size:11px;line-height:12px;color:#ffffe8;">Bakiye:0,00</div>
<div class="t" style="left:173px;top:997px;font-size:11px;line-height:12px;color:#000;letter-spacing:0.2px;">Kdv Hariç Toplam:1.276.191,50</div>
<div class="t" style="left:346.5px;top:997px;font-size:11px;line-height:12px;color:#000;letter-spacing:0.15px;">Toplam Kdv:57.915,47</div>
<div class="t" style="left:473px;top:997px;font-size:11px;line-height:12px;color:#000;letter-spacing:0.15px;">Diğer Vergiler:0,00</div>
<div class="t" style="left:581px;top:997px;font-size:11px;line-height:12px;color:#000;letter-spacing:0.12px;">Genel Toplam:1.334.106,97</div>
<div class="r" style="left:1664px;top:985px;width:128px;height:21px;background:#e1e1e1;border:1px solid #adadad;box-sizing:border-box;"></div>
<div class="r" style="left:1667px;top:988px;width:122px;height:15px;background:#008000;"></div>
<div class="t" style="left:1658.0px;width:140px;text-align:center;top:989px;font-size:12px;line-height:14px;font-weight:700;color:#ffffff;letter-spacing:0.2px;">DIŞARI AKTAR - F2</div>
<div class="r" style="left:1800px;top:985px;width:115px;height:21px;background:#e1e1e1;border:1px solid #adadad;box-sizing:border-box;"></div>
<div class="r" style="left:1803px;top:988px;width:109px;height:15px;background:#dc5a5a;"></div>
<div class="t" style="left:1787.5px;width:140px;text-align:center;top:989px;font-size:12px;line-height:14px;font-weight:700;color:#ffffff;">VAZGEÇ - ESC</div>
<div class="r" style="left:0px;top:1015px;width:1920px;height:1px;background:#a0a0a0;"></div>
<div class="r" style="left:1px;top:1019px;width:46px;height:1px;background:#a0a0a0;"></div>
<div class="r" style="left:1px;top:1019px;width:1px;height:17px;background:#a0a0a0;"></div>
<div class="r" style="left:1px;top:1036px;width:47px;height:1px;background:#ffffff;"></div>
<div class="r" style="left:47px;top:1019px;width:1px;height:18px;background:#ffffff;"></div>
<div class="r" style="left:49px;top:1019px;width:95px;height:1px;background:#a0a0a0;"></div>
<div class="r" style="left:49px;top:1019px;width:1px;height:17px;background:#a0a0a0;"></div>
<div class="r" style="left:49px;top:1036px;width:96px;height:1px;background:#ffffff;"></div>
<div class="r" style="left:144px;top:1019px;width:1px;height:18px;background:#ffffff;"></div>
<div class="t" style="left:6.5px;top:1022px;font-size:11px;line-height:12px;color:#000;letter-spacing:-0.4px;">DEBUG</div>
<div class="t" style="left:54px;top:1022px;font-size:11px;line-height:12px;color:#000;letter-spacing:0.06px;">Versiyon : 5.1.0.0</div></body></html>
